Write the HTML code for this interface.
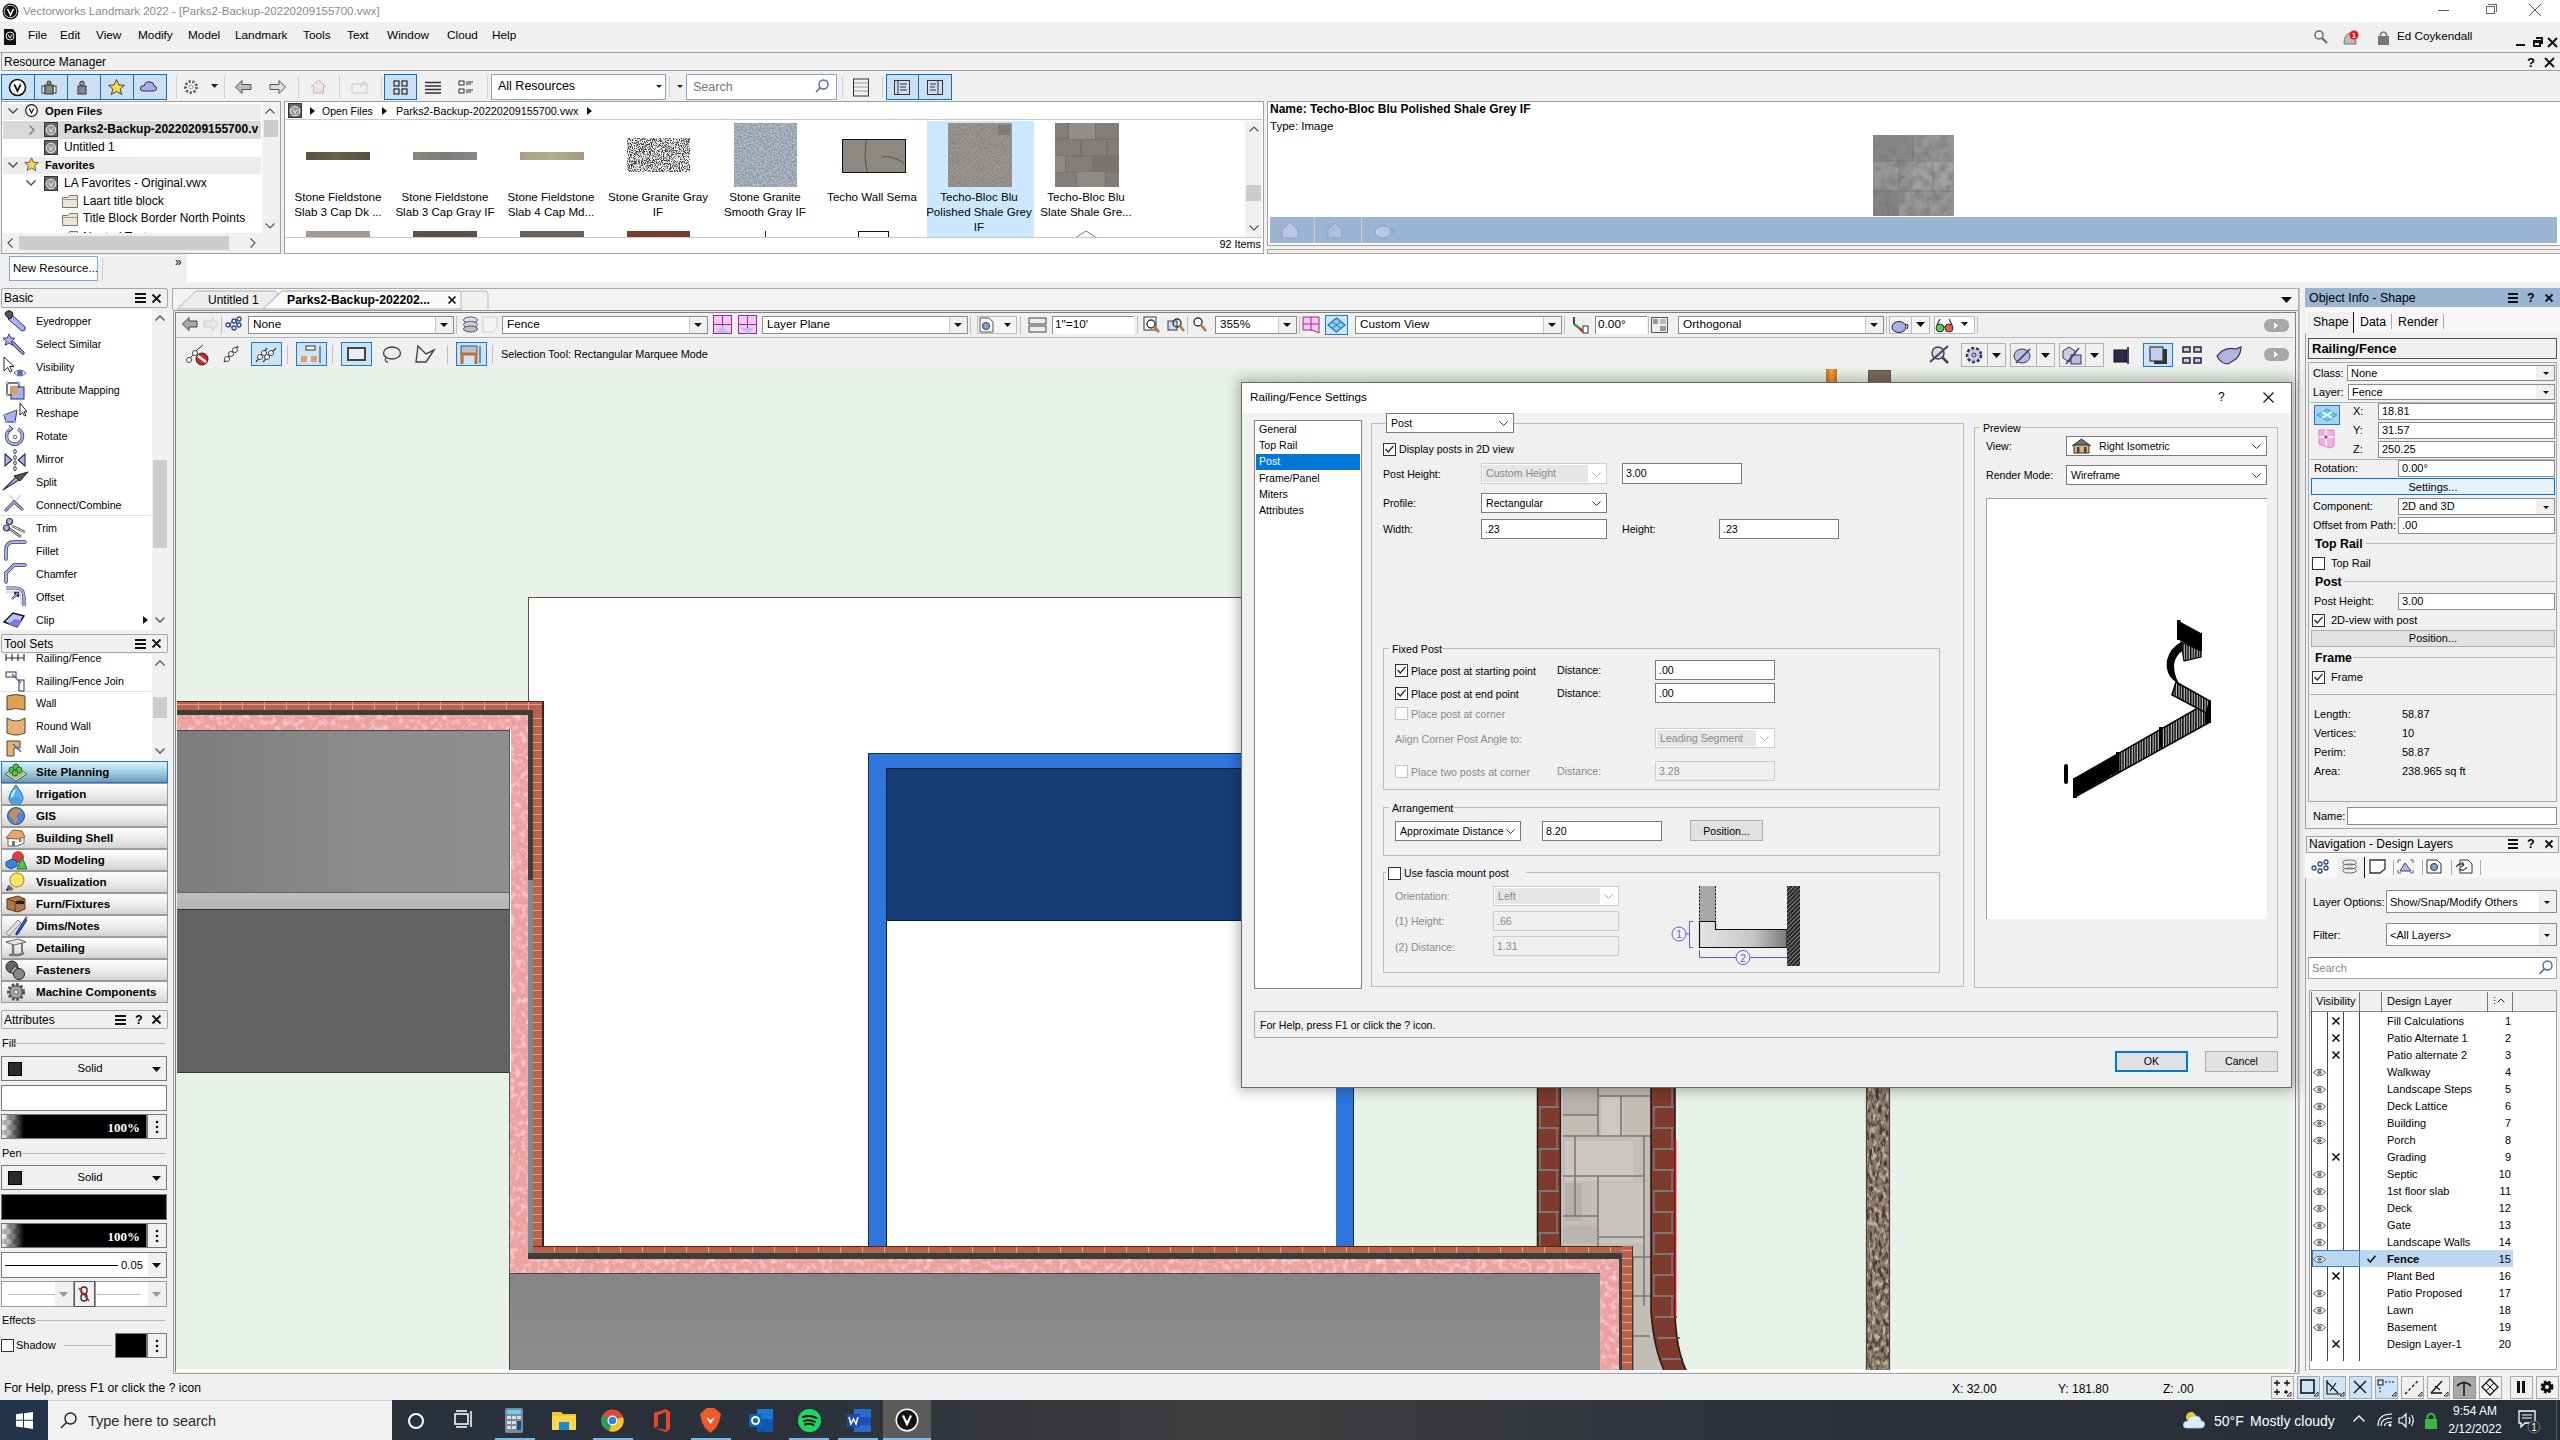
<!DOCTYPE html>
<html><head><meta charset="utf-8"><title>Vectorworks</title>
<style>
html,body{margin:0;padding:0}
body{width:2560px;height:1440px;position:relative;overflow:hidden;background:#f0f0f0;font-family:"Liberation Sans",sans-serif;font-size:12px;color:#000}
.a{position:absolute}
.t{position:absolute;white-space:nowrap;line-height:1}
.b{font-weight:bold}
.ln{position:absolute;background:#a0a0a0}
.fld{position:absolute;background:#fff;border:1px solid #7a7a7a;box-sizing:border-box}
.btn{position:absolute;box-sizing:border-box}
svg{position:absolute;overflow:visible}

</style></head><body>
<div class="a" style="left:0px;top:0px;width:2560px;height:22px;background:#fff"></div>
<svg style="left:2px;top:3px;" width="17" height="17" viewBox="0 0 17 17"><circle cx="8.5" cy="8.5" r="8" fill="#111"/><circle cx="8.5" cy="8.5" r="6.3" fill="none" stroke="#fff" stroke-width="0.8"/><path d="M5.5 6 L8.5 12 L11.5 6" fill="none" stroke="#fff" stroke-width="1.6"/></svg>
<div class="t " style="left:23px;top:5.5px;font-size:11.5px;color:#8a8a8a">Vectorworks Landmark 2022 - [Parks2-Backup-20220209155700.vwx]</div>
<div class="a" style="left:2438px;top:10px;width:11px;height:1px;background:#555"></div>
<div class="a" style="left:2486px;top:6px;width:9px;height:8px;border:1px solid #666;box-sizing:border-box"></div>
<div class="a" style="left:2488px;top:4px;width:9px;height:8px;border-top:1px solid #666;border-right:1px solid #666;box-sizing:border-box"></div>
<svg style="left:2529px;top:4px;" width="12" height="12" viewBox="0 0 12 12"><path d="M0 0L12 12M12 0L0 12" stroke="#555" stroke-width="1"/></svg>
<div class="a" style="left:0px;top:22px;width:2560px;height:30px;background:#f0f0f0"></div>
<svg style="left:4px;top:29px;" width="13" height="16" viewBox="0 0 13 16"><path d="M0 0H9L12 4V16H0Z" fill="#111"/><circle cx="6" cy="7" r="4" fill="none" stroke="#fff" stroke-width="0.9"/><path d="M4 5.5L6 9L8 5.5" fill="none" stroke="#fff" stroke-width="1"/></svg>
<div class="t " style="left:28px;top:30.3px;font-size:11.8px;">File</div>
<div class="t " style="left:60px;top:30.3px;font-size:11.8px;">Edit</div>
<div class="t " style="left:96px;top:30.3px;font-size:11.8px;">View</div>
<div class="t " style="left:138px;top:30.3px;font-size:11.8px;">Modify</div>
<div class="t " style="left:188px;top:30.3px;font-size:11.8px;">Model</div>
<div class="t " style="left:235px;top:30.3px;font-size:11.8px;">Landmark</div>
<div class="t " style="left:303px;top:30.3px;font-size:11.8px;">Tools</div>
<div class="t " style="left:347px;top:30.3px;font-size:11.8px;">Text</div>
<div class="t " style="left:387px;top:30.3px;font-size:11.8px;">Window</div>
<div class="t " style="left:447px;top:30.3px;font-size:11.8px;">Cloud</div>
<div class="t " style="left:492px;top:30.3px;font-size:11.8px;">Help</div>
<svg style="left:2314px;top:30px;" width="14" height="14" viewBox="0 0 14 14"><circle cx="5" cy="5" r="4" fill="none" stroke="#666" stroke-width="1.5"/><path d="M8 8L13 13" stroke="#666" stroke-width="2"/></svg>
<svg style="left:2342px;top:30px;" width="18" height="16" viewBox="0 0 18 16"><path d="M2 14 Q2 4 8 3 Q14 4 14 14Z" fill="#bbb" stroke="#777" stroke-width="1"/><circle cx="12" cy="5" r="4.5" fill="#e8141b"/><text x="12" y="8" font-size="7" fill="#fff" text-anchor="middle" font-family="Liberation Sans" font-weight="bold">1</text></svg>
<svg style="left:2377px;top:30px;" width="13" height="16" viewBox="0 0 13 16"><rect x="1" y="6" width="11" height="9" fill="#777"/><path d="M3.5 6V4 Q6.5 0 9.5 4V6" fill="none" stroke="#777" stroke-width="1.5"/></svg>
<div class="t " style="left:2397px;top:30.4px;font-size:11.7px;">Ed Coykendall</div>
<div class="a" style="left:2516px;top:44px;width:9px;height:2px;background:#111"></div>
<div class="a" style="left:2533px;top:40px;width:8px;height:7px;border:2px solid #111;border-top-width:3px;box-sizing:border-box"></div>
<div class="a" style="left:2536px;top:37px;width:7px;height:7px;border-top:2px solid #111;border-right:2px solid #111;box-sizing:border-box"></div>
<svg style="left:2548px;top:38px;" width="9" height="9" viewBox="0 0 9 9"><path d="M0 0L9 9M9 0L0 9" stroke="#111" stroke-width="2"/></svg>
<div class="a" style="left:0px;top:52px;width:2560px;height:1px;background:#a0a0a0"></div>
<div class="a" style="left:1px;top:53px;width:2559px;height:18px;background:#f0f0f0;border-left:1px solid #a0a0a0;border-bottom:1px solid #a0a0a0;box-sizing:border-box"></div>
<div class="t " style="left:4px;top:56.2px;font-size:12px;">Resource Manager</div>
<div class="t " style="left:2527px;top:55.7px;font-size:13px;font-weight:bold">?</div>
<svg style="left:2545px;top:58px;" width="9" height="9" viewBox="0 0 9 9"><path d="M0 0L9 9M9 0L0 9" stroke="#111" stroke-width="1.8"/></svg>
<div class="a" style="left:1px;top:74px;width:166px;height:26px;background:#cce0f4;border:1px solid #0b6fd6;box-sizing:border-box"></div>
<div class="a" style="left:34px;top:74px;width:1px;height:26px;background:#0b6fd6"></div>
<div class="a" style="left:67px;top:74px;width:1px;height:26px;background:#0b6fd6"></div>
<div class="a" style="left:100px;top:74px;width:1px;height:26px;background:#0b6fd6"></div>
<div class="a" style="left:133px;top:74px;width:1px;height:26px;background:#0b6fd6"></div>
<svg style="left:8px;top:78px;" width="19" height="19" viewBox="0 0 19 19"><circle cx="9.5" cy="9.5" r="8" fill="#fff" stroke="#111" stroke-width="1.6"/><path d="M6.3 6.5L9.5 13L12.7 6.5" fill="none" stroke="#111" stroke-width="1.7"/></svg>
<svg style="left:41px;top:80px;" width="16" height="15" viewBox="0 0 16 15"><rect x="1" y="6" width="3" height="7" fill="#fff" stroke="#333"/><rect x="12" y="6" width="3" height="7" fill="#fff" stroke="#333"/><rect x="4" y="5" width="8" height="9" fill="#888" stroke="#333"/><circle cx="8" cy="3" r="2" fill="#888" stroke="#333"/></svg>
<svg style="left:77px;top:80px;" width="10" height="15" viewBox="0 0 10 15"><rect x="1" y="6" width="8" height="8" fill="#888" stroke="#333"/><circle cx="5" cy="3.5" r="2.3" fill="#999" stroke="#333"/></svg>
<svg style="left:108px;top:79px;" width="17" height="16" viewBox="0 0 17 16"><path d="M8.5 0.5L11 6L16.5 6.3L12.2 10L13.7 15.5L8.5 12.5L3.3 15.5L4.8 10L0.5 6.3L6 6Z" fill="#f7d847" stroke="#444" stroke-width="1"/></svg>
<svg style="left:140px;top:80px;" width="17" height="11" viewBox="0 0 17 11"><path d="M3 11 Q0 11 0.5 8 Q1 5 4 6 Q5 1 10 2 Q14 2 14 6 Q17 6 16.5 9 Q16 11 13 11Z" fill="#aaaaf0" stroke="#333" stroke-width="1"/></svg>
<div class="a" style="left:176px;top:76px;width:1px;height:22px;background:#cfcfcf"></div>
<svg style="left:183px;top:79px;" width="16" height="16" viewBox="0 0 16 16"><circle cx="8" cy="8" r="5.5" fill="#fff" stroke="#666" stroke-width="3" stroke-dasharray="2.2 1.6"/><circle cx="8" cy="8" r="2" fill="none" stroke="#7d8fb0"/></svg>
<svg style="left:211px;top:84px;" width="7" height="4" viewBox="0 0 7 4"><path d="M0 0H7L3.5 4Z" fill="#222"/></svg>
<div class="a" style="left:224px;top:76px;width:1px;height:22px;background:#cfcfcf"></div>
<svg style="left:235px;top:80px;" width="17" height="14" viewBox="0 0 17 14"><path d="M0.5 7L7 0.5V4.5H16V9.5H7V13.5Z" fill="#bbb" stroke="#555" stroke-width="1"/></svg>
<svg style="left:269px;top:80px;" width="17" height="14" viewBox="0 0 17 14"><path d="M16.5 7L10 0.5V4.5H1V9.5H10V13.5Z" fill="#ddd" stroke="#555" stroke-width="1"/></svg>
<div class="a" style="left:298px;top:76px;width:1px;height:22px;background:#cfcfcf"></div>
<svg style="left:310px;top:79px;" width="17" height="15" viewBox="0 0 17 15"><path d="M1 8L8.5 1L16 8M3.5 6V14H13.5V6" fill="#f2e0e0" stroke="#d8b0b0" stroke-width="1"/></svg>
<div class="a" style="left:339px;top:76px;width:1px;height:22px;background:#cfcfcf"></div>
<svg style="left:351px;top:80px;" width="17" height="14" viewBox="0 0 17 14"><rect x="1" y="4" width="15" height="9" fill="#efefef" stroke="#ccc"/><path d="M9 7L13 2L16 6" fill="none" stroke="#b5e0b5" stroke-width="1.5"/></svg>
<div class="a" style="left:381px;top:76px;width:1px;height:22px;background:#cfcfcf"></div>
<div class="a" style="left:384px;top:74px;width:33px;height:26px;background:#cce0f4;border:1px solid #0b6fd6;box-sizing:border-box"></div>
<svg style="left:393px;top:80px;" width="15" height="15" viewBox="0 0 15 15"><rect x="1" y="1" width="5" height="5" fill="none" stroke="#333" stroke-width="1.3"/><rect x="9" y="1" width="5" height="5" fill="none" stroke="#333" stroke-width="1.3"/><rect x="1" y="9" width="5" height="5" fill="none" stroke="#333" stroke-width="1.3"/><rect x="9" y="9" width="5" height="5" fill="none" stroke="#333" stroke-width="1.3"/></svg>
<svg style="left:425px;top:81px;" width="16" height="13" viewBox="0 0 16 13"><path d="M0 1.5H16M0 5H16M0 8.5H16M0 12H16" stroke="#333" stroke-width="1.3"/></svg>
<svg style="left:458px;top:80px;" width="16" height="15" viewBox="0 0 16 15"><rect x="1" y="1" width="5" height="4" fill="none" stroke="#333"/><rect x="1" y="9" width="5" height="4" fill="none" stroke="#333"/><path d="M8 2H15M8 4H13M8 10H15M8 12H13" stroke="#333"/></svg>
<div class="a" style="left:487px;top:76px;width:1px;height:22px;background:#cfcfcf"></div>
<div class="a" style="left:491px;top:74px;width:175px;height:26px;background:#fff;border:1px solid #7ea6d8;box-sizing:border-box"></div>
<div class="t " style="left:498px;top:80.0px;font-size:12.5px;">All Resources</div>
<svg style="left:656px;top:85px;" width="6" height="3" viewBox="0 0 6 3"><path d="M0 0H6L3 3Z" fill="#222"/></svg>
<div class="a" style="left:669px;top:76px;width:1px;height:22px;background:#cfcfcf"></div>
<svg style="left:677px;top:85px;" width="6" height="3" viewBox="0 0 6 3"><path d="M0 0H6L3 3Z" fill="#222"/></svg>
<div class="a" style="left:686px;top:74px;width:151px;height:26px;background:#fff;border:1px solid #7ea6d8;box-sizing:border-box"></div>
<div class="t " style="left:693px;top:81.0px;font-size:12.5px;color:#777">Search</div>
<svg style="left:815px;top:79px;" width="14" height="14" viewBox="0 0 14 14"><circle cx="8.5" cy="5.5" r="4.5" fill="none" stroke="#4a6aa8" stroke-width="1.4"/><path d="M5.5 8.5L1 13" stroke="#4a6aa8" stroke-width="1.6"/></svg>
<div class="a" style="left:842px;top:76px;width:1px;height:22px;background:#cfcfcf"></div>
<svg style="left:853px;top:78px;" width="16" height="20" viewBox="0 0 16 20"><rect x="0.5" y="1" width="15" height="17" fill="none" stroke="#333"/><path d="M1 5H15M1 9H15M1 13H15" stroke="#999"/></svg>
<div class="a" style="left:882px;top:76px;width:1px;height:22px;background:#cfcfcf"></div>
<div class="a" style="left:886px;top:74px;width:66px;height:26px;background:#cce0f4;border:1px solid #0b6fd6;box-sizing:border-box"></div>
<div class="a" style="left:918px;top:74px;width:1px;height:26px;background:#0b6fd6"></div>
<svg style="left:894px;top:80px;" width="16" height="15" viewBox="0 0 16 15"><rect x="0.5" y="0.5" width="15" height="14" fill="none" stroke="#333"/><path d="M4 1V14M6 4H13M6 7H12M6 10H13" stroke="#333"/></svg>
<svg style="left:927px;top:80px;" width="16" height="15" viewBox="0 0 16 15"><rect x="0.5" y="0.5" width="15" height="14" fill="none" stroke="#333"/><path d="M11 1V14M3 4H9M3 7H8M3 10H9" stroke="#333"/></svg>
<div class="a" style="left:1px;top:101px;width:280px;height:153px;background:#fff;border:1px solid #a0a0a0;box-sizing:border-box"></div>
<div class="a" style="left:3px;top:104px;width:258px;height:16px;background:#ececec"></div>
<div class="a" style="left:3px;top:121px;width:258px;height:18px;background:#d9d9d9"></div>
<div class="a" style="left:3px;top:157px;width:258px;height:17px;background:#ececec"></div>
<div class="a" style="left:262px;top:102px;width:18px;height:131px;background:#f0f0f0"></div>
<svg style="left:265px;top:108px;" width="10" height="6" viewBox="0 0 10 6"><path d="M0.5 5.5L5 1L9.5 5.5" fill="none" stroke="#555" stroke-width="1.2"/></svg>
<svg style="left:265px;top:223px;" width="10" height="6" viewBox="0 0 10 6"><path d="M0.5 0.5L5 5L9.5 0.5" fill="none" stroke="#555" stroke-width="1.2"/></svg>
<div class="a" style="left:264px;top:120px;width:14px;height:17px;background:#cdcdcd"></div>
<div class="a" style="left:2px;top:233px;width:278px;height:20px;background:#f0f0f0"></div>
<div class="a" style="left:19px;top:236px;width:210px;height:14px;background:#cdcdcd"></div>
<svg style="left:7px;top:238px;" width="6" height="10" viewBox="0 0 6 10"><path d="M5.5 0.5L1 5L5.5 9.5" fill="none" stroke="#555" stroke-width="1.2"/></svg>
<svg style="left:250px;top:238px;" width="6" height="10" viewBox="0 0 6 10"><path d="M0.5 0.5L5 5L0.5 9.5" fill="none" stroke="#555" stroke-width="1.2"/></svg>
<svg style="left:8px;top:108px;" width="10" height="6" viewBox="0 0 10 6"><path d="M0.5 0.5L5 5L9.5 0.5" fill="none" stroke="#444" stroke-width="1.3"/></svg>
<svg style="left:25px;top:104px;" width="13" height="13" viewBox="0 0 13 13"><circle cx="6.5" cy="6.5" r="5.8" fill="#fff" stroke="#111" stroke-width="1.2"/><path d="M4.3 4.5L6.5 9L8.7 4.5" fill="none" stroke="#111" stroke-width="1.2"/></svg>
<div class="t " style="left:45px;top:105.6px;font-size:11.2px;font-weight:bold">Open Files</div>
<svg style="left:29px;top:125px;" width="6" height="10" viewBox="0 0 6 10"><path d="M0.5 0.5L5 5L0.5 9.5" fill="none" stroke="#777" stroke-width="1.2"/></svg>
<svg style="left:44px;top:122px;" width="14" height="15" viewBox="0 0 14 15"><rect x="0.5" y="0.5" width="13" height="14" fill="#666" stroke="#333"/><circle cx="7" cy="8" r="4.8" fill="#999" stroke="#eee" stroke-width="1"/><path d="M5 6.3L7 10.3L9 6.3" fill="none" stroke="#eee" stroke-width="1"/></svg>
<div class="t " style="left:64px;top:123.2px;font-size:12px;font-weight:bold">Parks2-Backup-20220209155700.v</div>
<svg style="left:44px;top:140px;" width="14" height="15" viewBox="0 0 14 15"><rect x="0.5" y="0.5" width="13" height="14" fill="#666" stroke="#333"/><circle cx="7" cy="8" r="4.8" fill="#999" stroke="#eee" stroke-width="1"/><path d="M5 6.3L7 10.3L9 6.3" fill="none" stroke="#eee" stroke-width="1"/></svg>
<div class="t " style="left:64px;top:141.2px;font-size:12px;">Untitled 1</div>
<svg style="left:8px;top:162px;" width="10" height="6" viewBox="0 0 10 6"><path d="M0.5 0.5L5 5L9.5 0.5" fill="none" stroke="#444" stroke-width="1.3"/></svg>
<svg style="left:24px;top:157px;" width="15" height="15" viewBox="0 0 15 15"><path d="M7.5 0.8L9.5 5.3L14.3 5.6L10.6 8.7L11.8 13.6L7.5 11L3.2 13.6L4.4 8.7L0.7 5.6L5.5 5.3Z" fill="#f7d847" stroke="#555" stroke-width="0.9"/></svg>
<div class="t " style="left:45px;top:159.6px;font-size:11.2px;font-weight:bold">Favorites</div>
<svg style="left:26px;top:180px;" width="10" height="6" viewBox="0 0 10 6"><path d="M0.5 0.5L5 5L9.5 0.5" fill="none" stroke="#444" stroke-width="1.3"/></svg>
<svg style="left:44px;top:176px;" width="14" height="15" viewBox="0 0 14 15"><rect x="0.5" y="0.5" width="13" height="14" fill="#666" stroke="#333"/><circle cx="7" cy="8" r="4.8" fill="#999" stroke="#eee" stroke-width="1"/><path d="M5 6.3L7 10.3L9 6.3" fill="none" stroke="#eee" stroke-width="1"/></svg>
<div class="t " style="left:64px;top:177.2px;font-size:12px;">LA Favorites - Original.vwx</div>
<svg style="left:62px;top:195px;" width="16" height="13" viewBox="0 0 16 13"><path d="M0.5 2.5H6L7.5 0.5H15.5V12.5H0.5Z" fill="#ece6d2" stroke="#777"/><path d="M0.5 4.5H15.5" stroke="#999"/></svg>
<div class="t " style="left:83px;top:195.2px;font-size:12px;">Laart title block</div>
<svg style="left:62px;top:213px;" width="16" height="13" viewBox="0 0 16 13"><path d="M0.5 2.5H6L7.5 0.5H15.5V12.5H0.5Z" fill="#ece6d2" stroke="#777"/><path d="M0.5 4.5H15.5" stroke="#999"/></svg>
<div class="t " style="left:83px;top:213.3px;font-size:11.9px;">Title Block Border North Points</div>
<div class="a" style="left:3px;top:228px;width:258px;height:5px;overflow:hidden"><svg style="left:59px;top:3px" width="16" height="13"><path d="M0.5 2.5H6L7.5 0.5H15.5V12.5H0.5Z" fill="#ece6d2" stroke="#777"/></svg><div class="t" style="left:80px;top:3.2px;font-size:12px">Neutral Text</div></div>
<div class="a" style="left:284px;top:101px;width:980px;height:153px;background:#fff;border:1px solid #a0a0a0;box-sizing:border-box"></div>
<div class="a" style="left:285px;top:119px;width:977px;height:1px;background:#c8c8c8"></div>
<svg style="left:288px;top:103px;" width="14" height="15" viewBox="0 0 14 15"><rect x="0.5" y="0.5" width="13" height="14" fill="#666" stroke="#333"/><circle cx="7" cy="8" r="4.8" fill="#999" stroke="#eee"/><path d="M5 6.3L7 10.3L9 6.3" fill="none" stroke="#eee"/></svg>
<svg style="left:310px;top:107px;" width="5" height="8" viewBox="0 0 5 8"><path d="M0 0L5 4L0 8Z" fill="#111"/></svg>
<div class="t " style="left:322px;top:105.9px;font-size:10.5px;">Open Files</div>
<svg style="left:382px;top:107px;" width="5" height="8" viewBox="0 0 5 8"><path d="M0 0L5 4L0 8Z" fill="#111"/></svg>
<div class="t " style="left:396px;top:105.8px;font-size:10.8px;">Parks2-Backup-20220209155700.vwx</div>
<svg style="left:587px;top:107px;" width="5" height="8" viewBox="0 0 5 8"><path d="M0 0L5 4L0 8Z" fill="#111"/></svg>
<div class="a" style="left:927px;top:121px;width:107px;height:116px;background:#cce8ff"></div>
<div class="a" style="left:306px;top:152px;width:64px;height:8px;background:linear-gradient(90deg,#5b5344,#6a604d,#564e40)"></div>
<div class="a" style="left:413px;top:152px;width:64px;height:8px;background:linear-gradient(90deg,#8c8783,#7e7a77,#8a8683)"></div>
<div class="a" style="left:520px;top:152px;width:64px;height:8px;background:linear-gradient(90deg,#a8a07e,#b4ad8e,#a39a7a)"></div>
<svg style="left:627px;top:138px;" width="63" height="34" viewBox="0 0 63 34"><filter id="gr1" x="0" y="0" width="100%" height="100%"><feTurbulence type="fractalNoise" baseFrequency="1.1" numOctaves="1" seed="3"/><feColorMatrix type="matrix" values="0 0 0 0 0.05  0 0 0 0 0.05  0 0 0 0 0.05  7 0 0 0 -3.2"/></filter><rect width="63" height="34" fill="#eeeeee"/><rect width="63" height="34" filter="url(#gr1)"/></svg>
<svg style="left:734px;top:123px;" width="63" height="64" viewBox="0 0 63 64"><filter id="gr2" x="0" y="0" width="100%" height="100%"><feTurbulence type="fractalNoise" baseFrequency="0.6" numOctaves="2" seed="5"/><feColorMatrix type="matrix" values="0 0 0 0 0.25  0 0 0 0 0.3  0 0 0 0 0.38  3.5 0 0 0 -1.3"/></filter><rect width="63" height="64" fill="#b4bcc8"/><rect width="63" height="64" filter="url(#gr2)"/></svg>
<div class="a" style="left:842px;top:139px;width:64px;height:34px;background:#8d8882;border:1px solid #111;box-sizing:border-box"></div>
<svg style="left:842px;top:139px;" width="64" height="34" viewBox="0 0 64 34"><path d="M24 1 L23 20 L25 33 M40 18 Q50 16 62 24" stroke="#444" fill="none" stroke-width="0.8"/></svg>
<svg style="left:948px;top:123px;" width="64" height="64" viewBox="0 0 64 64"><filter id="gr3" x="0" y="0" width="100%" height="100%"><feTurbulence type="fractalNoise" baseFrequency="0.7" numOctaves="2" seed="7"/><feColorMatrix type="matrix" values="0 0 0 0 0.25  0 0 0 0 0.23  0 0 0 0 0.22  4.0 0 0 0 -1.6"/></filter><rect width="64" height="64" fill="#9c9792"/><rect width="64" height="64" filter="url(#gr3)"/><rect x="50" y="2" width="12" height="10" fill="#555" opacity=".35"/></svg>
<svg style="left:1055px;top:123px;" width="64" height="64" viewBox="0 0 64 64"><rect width="64" height="64" fill="#847e7a"/><path d="M0 16H64M0 33H64M0 49H64M13 0V16M40 0V16M26 16V33M52 16V33M10 33V49M38 33V49M22 49V64M50 49V64" stroke="#6f6a67" stroke-width="1.2"/><rect x="14" y="0" width="26" height="16" fill="#938d89"/><rect x="0" y="33" width="10" height="16" fill="#8f8985"/><rect x="38" y="33" width="26" height="16" fill="#797470"/><rect x="22" y="49" width="28" height="15" fill="#918b87"/></svg>
<div class="t " style="left:278.0px;width:120px;text-align:center;top:191.4px;font-size:11.6px;">Stone Fieldstone</div>
<div class="t " style="left:278.0px;width:120px;text-align:center;top:206.4px;font-size:11.6px;">Slab 3 Cap Dk ...</div>
<div class="t " style="left:385.0px;width:120px;text-align:center;top:191.4px;font-size:11.6px;">Stone Fieldstone</div>
<div class="t " style="left:385.0px;width:120px;text-align:center;top:206.4px;font-size:11.6px;">Slab 3 Cap Gray IF</div>
<div class="t " style="left:491.0px;width:120px;text-align:center;top:191.4px;font-size:11.6px;">Stone Fieldstone</div>
<div class="t " style="left:491.0px;width:120px;text-align:center;top:206.4px;font-size:11.6px;">Slab 4 Cap Md...</div>
<div class="t " style="left:598.0px;width:120px;text-align:center;top:191.4px;font-size:11.6px;">Stone Granite Gray</div>
<div class="t " style="left:598.0px;width:120px;text-align:center;top:206.4px;font-size:11.6px;">IF</div>
<div class="t " style="left:705.0px;width:120px;text-align:center;top:191.4px;font-size:11.6px;">Stone Granite</div>
<div class="t " style="left:705.0px;width:120px;text-align:center;top:206.4px;font-size:11.6px;">Smooth Gray IF</div>
<div class="t " style="left:812.0px;width:120px;text-align:center;top:191.4px;font-size:11.6px;">Techo Wall Sema</div>
<div class="t " style="left:919.0px;width:120px;text-align:center;top:191.4px;font-size:11.6px;">Techo-Bloc Blu</div>
<div class="t " style="left:919.0px;width:120px;text-align:center;top:206.4px;font-size:11.6px;">Polished Shale Grey</div>
<div class="t " style="left:919.0px;width:120px;text-align:center;top:221.4px;font-size:11.6px;">IF</div>
<div class="t " style="left:1026.0px;width:120px;text-align:center;top:191.4px;font-size:11.6px;">Techo-Bloc Blu</div>
<div class="t " style="left:1026.0px;width:120px;text-align:center;top:206.4px;font-size:11.6px;">Slate Shale Gre...</div>
<div class="a" style="left:306px;top:231px;width:64px;height:7px;background:#a39b93"></div>
<div class="a" style="left:413px;top:231px;width:64px;height:7px;background:#5c5049"></div>
<div class="a" style="left:520px;top:231px;width:64px;height:7px;background:#6b625b"></div>
<div class="a" style="left:627px;top:231px;width:63px;height:7px;background:#7a3d2d"></div>
<div class="a" style="left:765px;top:231px;width:1px;height:7px;background:#333"></div>
<div class="a" style="left:858px;top:231px;width:31px;height:7px;border:1px solid #111;border-bottom:none;box-sizing:border-box"></div>
<svg style="left:1075px;top:230px;" width="22" height="8" viewBox="0 0 22 8"><path d="M0 8L11 1L22 8" fill="none" stroke="#777"/></svg>
<div class="a" style="left:285px;top:237px;width:977px;height:1px;background:#c8c8c8"></div>
<div class="a" style="left:1245px;top:121px;width:17px;height:116px;background:#f0f0f0"></div>
<svg style="left:1249px;top:126px;" width="10" height="6" viewBox="0 0 10 6"><path d="M0.5 5.5L5 1L9.5 5.5" fill="none" stroke="#555" stroke-width="1.2"/></svg>
<svg style="left:1249px;top:225px;" width="10" height="6" viewBox="0 0 10 6"><path d="M0.5 0.5L5 5L9.5 0.5" fill="none" stroke="#555" stroke-width="1.2"/></svg>
<div class="a" style="left:1246px;top:185px;width:15px;height:16px;background:#cdcdcd"></div>
<div class="t " style="right:1299px;top:238.8px;font-size:10.8px;">92 Items</div>
<div class="a" style="left:1267px;top:101px;width:1293px;height:145px;background:#fff;border:1px solid #a0a0a0;border-right:none;box-sizing:border-box"></div>
<div class="t " style="left:1270px;top:103.2px;font-size:12px;font-weight:bold">Name: Techo-Bloc Blu Polished Shale Grey IF</div>
<div class="t " style="left:1270px;top:120.5px;font-size:11.5px;">Type: Image</div>
<svg style="left:1873px;top:135px;" width="81" height="81" viewBox="0 0 81 81"><filter id="gr4" x="0" y="0" width="100%" height="100%"><feTurbulence type="fractalNoise" baseFrequency="0.12" numOctaves="3" seed="9"/><feColorMatrix type="matrix" values="0 0 0 0 0.2  0 0 0 0 0.2  0 0 0 0 0.2  1.6 0 0 0 -0.5"/></filter><rect width="81" height="81" fill="#9a9896"/><rect x="0" y="0" width="40" height="26" fill="#8a8886"/><rect x="40" y="26" width="41" height="30" fill="#a4a2a0"/><rect x="0" y="56" width="26" height="25" fill="#858381"/><rect width="81" height="81" filter="url(#gr4)"/><path d="M0 26H81M0 56H81M40 0V26M26 26V56M60 26V56M15 56V81M55 56V81" stroke="#6a6866" stroke-width="0.8" opacity=".6"/></svg>
<div class="a" style="left:1270px;top:217px;width:1287px;height:26px;background:#9ab4d4"></div>
<div class="a" style="left:1314px;top:217px;width:1px;height:26px;background:#d8d0b8"></div>
<div class="a" style="left:1361px;top:217px;width:1px;height:26px;background:#d8d0b8"></div>
<svg style="left:1280px;top:220px;" width="20" height="20" viewBox="0 0 20 20"><path d="M2 10L10 2L18 10V18H2Z" fill="#b8c8e0" stroke="#8aa0c0"/></svg>
<svg style="left:1325px;top:220px;" width="20" height="20" viewBox="0 0 20 20"><path d="M3 9L10 3L17 9V18H3Z" fill="#b0c0da" stroke="#8aa0c0"/></svg>
<svg style="left:1372px;top:220px;" width="24" height="20" viewBox="0 0 24 20"><ellipse cx="11" cy="12" rx="8" ry="6" fill="#b8c8e4" stroke="#8aa0c0"/><path d="M18 10Q23 8 20 14" fill="none" stroke="#8aa0c0"/></svg>
<div class="a" style="left:1267px;top:249px;width:1293px;height:5px;border:1px solid #a8a8a8;border-right:none;box-sizing:border-box"></div>
<div class="a" style="left:187px;top:254px;width:2373px;height:28px;background:#fff"></div>
<div class="a" style="left:9px;top:256px;width:89px;height:25px;background:#fff;border:1px solid #7ea6d8;box-sizing:border-box"></div>
<div class="t " style="left:13px;top:262.5px;font-size:11.5px;">New Resource...</div>
<div class="a" style="left:102px;top:258px;width:1px;height:22px;background:#cfcfcf"></div>
<div class="t " style="left:175px;top:256.2px;font-size:12px;">&raquo;</div>
<div class="a" style="left:1px;top:288px;width:167px;height:20px;background:#f0f0f0;border:1px solid #a8a8a8;border-radius:2px;box-sizing:border-box"></div>
<div class="t " style="left:4px;top:292.2px;font-size:12px;">Basic</div>
<svg style="left:135px;top:293.0px;" width="11" height="10" viewBox="0 0 11 10"><path d="M0 1H11M0 5H11M0 9H11" stroke="#111" stroke-width="1.8"/></svg>
<svg style="left:152px;top:293.5px;" width="9" height="9" viewBox="0 0 9 9"><path d="M0.5 0.5L8.5 8.5M8.5 0.5L0.5 8.5" stroke="#111" stroke-width="1.8"/></svg>
<div class="a" style="left:0px;top:309px;width:152px;height:322px;background:#fff"></div>
<div class="a" style="left:152px;top:309px;width:16px;height:322px;background:#f0f0f0"></div>
<div class="a" style="left:153px;top:460px;width:14px;height:88px;background:#cdcdcd"></div>
<svg style="left:155px;top:315px;" width="10" height="6" viewBox="0 0 10 6"><path d="M0.5 5.5L5 1L9.5 5.5" fill="none" stroke="#555" stroke-width="1.3"/></svg>
<svg style="left:155px;top:617px;" width="10" height="6" viewBox="0 0 10 6"><path d="M0.5 0.5L5 5L9.5 0.5" fill="none" stroke="#555" stroke-width="1.3"/></svg>
<div class="a" style="left:0px;top:515px;width:151px;height:1px;background:#d0e4f4"></div>
<svg style="left:3px;top:310px;" width="24" height="22" viewBox="0 0 24 22"><path d="M9 5L22 17Q23 21 19 21L5 9Z" fill="#aab0f2" stroke="#2a2f5a" stroke-width="1"/><path d="M3 2Q6 -1 9 2Q11 4 9 7L7 9Q4 8 2.5 5Q1.5 3 3 2Z" fill="#555" stroke="#222"/></svg>
<div class="t " style="left:36px;top:315.8px;font-size:10.7px;">Eyedropper</div>
<svg style="left:3px;top:333px;" width="24" height="22" viewBox="0 0 24 22"><path d="M6 1L7.8 5L12 5.3L8.8 8L9.8 12.3L6 10L2.2 12.3L3.2 8L0 5.3L4.2 5Z" fill="#aab0f2" stroke="#2a2f5a" stroke-width="0.9"/><path d="M10 10L20 20" stroke="#2a2f5a" stroke-width="3.2" stroke-linecap="round"/><path d="M10 10L20 20" stroke="#aab0f2" stroke-width="1.6" stroke-linecap="round"/></svg>
<div class="t " style="left:36px;top:338.8px;font-size:10.7px;">Select Similar</div>
<svg style="left:3px;top:356px;" width="24" height="22" viewBox="0 0 24 22"><path d="M1 1V15L4.5 11.5L7 16L9 15L6.8 10.5H11Z" fill="#fff" stroke="#111" stroke-width="0.9"/><path d="M11 17Q17 11 23 17Q17 23 11 17Z" fill="#fff" stroke="#667"/><circle cx="17" cy="17" r="2.8" fill="#4a70b0"/></svg>
<div class="t " style="left:36px;top:361.8px;font-size:10.7px;">Visibility</div>
<svg style="left:3px;top:379px;" width="24" height="22" viewBox="0 0 24 22"><rect x="4" y="4" width="12" height="12" fill="none" stroke="#222" stroke-width="1.2"/><rect x="8" y="8" width="13" height="12" fill="#aab0f2" stroke="#2a2f5a"/><rect x="8" y="8" width="7" height="7" fill="#e0a050"/><circle cx="4" cy="4" r="1.4" fill="#8ab0f0"/><circle cx="16" cy="4" r="1.4" fill="#8ab0f0"/><circle cx="4" cy="16" r="1.4" fill="#8ab0f0"/><circle cx="16" cy="16" r="1.4" fill="#8ab0f0"/></svg>
<div class="t " style="left:36px;top:384.8px;font-size:10.7px;">Attribute Mapping</div>
<svg style="left:3px;top:402px;" width="24" height="22" viewBox="0 0 24 22"><path d="M1 13L14 8L12 20L3 20Z" fill="#aab0f2" stroke="#2a2f5a" stroke-width="1"/><path d="M1 13L14 8" stroke="#888"/><circle cx="1.5" cy="13" r="1.4" fill="#8ab0f0"/><circle cx="3" cy="20" r="1.4" fill="#8ab0f0"/><circle cx="12" cy="20" r="1.4" fill="#8ab0f0"/><path d="M17 1V13L19.5 10.5L21.5 14L23 13.3L21 9.8H24Z" fill="#fff" stroke="#111" stroke-width="0.9"/></svg>
<div class="t " style="left:36px;top:407.8px;font-size:10.7px;">Reshape</div>
<svg style="left:3px;top:425px;" width="24" height="22" viewBox="0 0 24 22"><path d="M15 4A8 8 0 1 1 8 4" fill="none" stroke="#2a2f5a" stroke-width="3.4"/><path d="M15 4A8 8 0 1 1 8 4" fill="none" stroke="#aab0f2" stroke-width="2"/><path d="M6 0L10 4L5 7" fill="#aab0f2" stroke="#2a2f5a" stroke-width="0.9"/><circle cx="12" cy="12" r="1.8" fill="none" stroke="#666"/></svg>
<div class="t " style="left:36px;top:430.8px;font-size:10.7px;">Rotate</div>
<svg style="left:3px;top:448px;" width="24" height="22" viewBox="0 0 24 22"><path d="M2 6L9 12L2 18Z" fill="#aab0f2" stroke="#2a2f5a" stroke-width="1.1"/><path d="M22 6L15 12L22 18Z" fill="#aab0f2" stroke="#2a2f5a" stroke-width="1.1"/><ellipse cx="12" cy="3.5" rx="1.3" ry="2" fill="none" stroke="#2a2f5a"/><ellipse cx="12" cy="9.5" rx="1.3" ry="2" fill="none" stroke="#2a2f5a"/><ellipse cx="12" cy="15" rx="1.3" ry="2" fill="none" stroke="#2a2f5a"/><ellipse cx="12" cy="20.5" rx="1.3" ry="2" fill="none" stroke="#2a2f5a"/></svg>
<div class="t " style="left:36px;top:453.8px;font-size:10.7px;">Mirror</div>
<svg style="left:3px;top:471px;" width="24" height="22" viewBox="0 0 24 22"><path d="M0 19L13 6L16 9Z" fill="#aab0f2" stroke="#2a2f5a" stroke-width="1.1"/><path d="M11 5L25 1L17 10Z" fill="#555" stroke="#222"/></svg>
<div class="t " style="left:36px;top:476.8px;font-size:10.7px;">Split</div>
<svg style="left:3px;top:494px;" width="24" height="22" viewBox="0 0 24 22"><path d="M6 1L18 13M18 1L11 8" stroke="#c8ccf4" stroke-width="1.2"/><path d="M2 17L11 8L20 16" fill="none" stroke="#2a2f5a" stroke-width="3"/><path d="M2 17L11 8L20 16" fill="none" stroke="#aab0f2" stroke-width="1.6"/></svg>
<div class="t " style="left:36px;top:499.8px;font-size:10.7px;">Connect/Combine</div>
<svg style="left:3px;top:517px;" width="24" height="22" viewBox="0 0 24 22"><path d="M9 9L22 15M7 12L18 20" stroke="#333" stroke-width="2.4"/><path d="M9 9L22 15M7 12L18 20" stroke="#eee" stroke-width="1"/><circle cx="6.5" cy="4.5" r="3" fill="#aab0f2" stroke="#333" stroke-width="1.2"/><circle cx="3.5" cy="11" r="3" fill="#aab0f2" stroke="#333" stroke-width="1.2"/></svg>
<div class="t " style="left:36px;top:522.8px;font-size:10.7px;">Trim</div>
<svg style="left:3px;top:540px;" width="24" height="22" viewBox="0 0 24 22"><path d="M3 19V10Q3 2 11 2H22" fill="none" stroke="#2a2f5a" stroke-width="3.4" stroke-linecap="round"/><path d="M3 19V10Q3 2 11 2H22" fill="none" stroke="#aab0f2" stroke-width="2" stroke-linecap="round"/></svg>
<div class="t " style="left:36px;top:545.8px;font-size:10.7px;">Fillet</div>
<svg style="left:3px;top:563px;" width="24" height="22" viewBox="0 0 24 22"><path d="M3 19V10L11 2H22" fill="none" stroke="#2a2f5a" stroke-width="3.4" stroke-linecap="round"/><path d="M3 19V10L11 2H22" fill="none" stroke="#aab0f2" stroke-width="2" stroke-linecap="round"/></svg>
<div class="t " style="left:36px;top:568.8px;font-size:10.7px;">Chamfer</div>
<svg style="left:3px;top:586px;" width="24" height="22" viewBox="0 0 24 22"><path d="M3 6H13Q18 6 18 12V18" fill="none" stroke="#d8daf6" stroke-width="2"/><path d="M3 2H13Q21 2 21 11V20" fill="none" stroke="#2a2f5a" stroke-width="3.2"/><path d="M3 2H13Q21 2 21 11V20" fill="none" stroke="#aab0f2" stroke-width="1.8"/><path d="M9 13L15 7M11 7H15V11" fill="none" stroke="#2a2f5a" stroke-width="2.4"/><path d="M9 13L15 7" stroke="#aab0f2" stroke-width="1.2"/></svg>
<div class="t " style="left:36px;top:591.8px;font-size:10.7px;">Offset</div>
<svg style="left:3px;top:609px;" width="24" height="22" viewBox="0 0 24 22"><path d="M1 13L10 4L21 7L14 18Z" fill="#c0c0f8" stroke="#111" stroke-width="1.4"/><path d="M5 15L12 10L19 12L14 18Z" fill="#7c7ce8"/></svg>
<div class="t " style="left:36px;top:614.8px;font-size:10.7px;">Clip</div>
<svg style="left:143px;top:616px;" width="5" height="8" viewBox="0 0 5 8"><path d="M0 0L5 4L0 8Z" fill="#111"/></svg>
<div class="a" style="left:0px;top:654px;width:152px;height:107px;background:#fff"></div>
<div class="a" style="left:152px;top:654px;width:16px;height:107px;background:#f0f0f0"></div>
<div class="a" style="left:153px;top:697px;width:14px;height:21px;background:#cdcdcd"></div>
<svg style="left:155px;top:660px;" width="10" height="6" viewBox="0 0 10 6"><path d="M0.5 5.5L5 1L9.5 5.5" fill="none" stroke="#555" stroke-width="1.3"/></svg>
<svg style="left:155px;top:748px;" width="10" height="6" viewBox="0 0 10 6"><path d="M0.5 0.5L5 5L9.5 0.5" fill="none" stroke="#555" stroke-width="1.3"/></svg>
<div class="a" style="left:0px;top:691px;width:151px;height:1px;background:#d0e4f4"></div>
<svg style="left:5px;top:647px;" width="24" height="22" viewBox="0 0 24 22"><path d="M1 2V14M7 2V14M13 2V14M19 2V14M1 4H19M1 11H19" stroke="#333" stroke-width="1.2"/></svg>
<div class="t " style="left:36px;top:652.8px;font-size:10.7px;">Railing/Fence</div>
<svg style="left:5px;top:670px;" width="24" height="22" viewBox="0 0 24 22"><rect x="1" y="2" width="10" height="5" fill="#fff" stroke="#333"/><rect x="14" y="10" width="5" height="11" fill="#fff" stroke="#333"/><path d="M7 4L16 13" stroke="#4466cc" stroke-width="1.5"/></svg>
<div class="t " style="left:36px;top:675.8px;font-size:10.7px;">Railing/Fence Join</div>
<svg style="left:5px;top:692px;" width="24" height="22" viewBox="0 0 24 22"><path d="M2 4Q10 1 20 4V18Q10 15 2 18Z" fill="#e3a050" stroke="#444"/></svg>
<div class="t " style="left:36px;top:697.8px;font-size:10.7px;">Wall</div>
<svg style="left:5px;top:715px;" width="24" height="22" viewBox="0 0 24 22"><path d="M2 3Q11 9 20 3V18Q11 22 2 18Z" fill="#e8b070" stroke="#444"/></svg>
<div class="t " style="left:36px;top:720.8px;font-size:10.7px;">Round Wall</div>
<svg style="left:5px;top:738px;" width="24" height="22" viewBox="0 0 24 22"><path d="M2 3H15V10H9V18H2Z" fill="#e8b070" stroke="#444"/><path d="M8 6L16 14" stroke="#4466cc" stroke-width="1.5"/></svg>
<div class="t " style="left:36px;top:743.8px;font-size:10.7px;">Wall Join</div>
<div class="a" style="left:0px;top:630px;width:168px;height:24px;background:#f0f0f0"></div>
<div class="a" style="left:1px;top:634px;width:167px;height:19px;background:#f0f0f0;border:1px solid #a8a8a8;border-radius:2px;box-sizing:border-box"></div>
<div class="t " style="left:4px;top:637.7px;font-size:12px;">Tool Sets</div>
<svg style="left:135px;top:638.5px;" width="11" height="10" viewBox="0 0 11 10"><path d="M0 1H11M0 5H11M0 9H11" stroke="#111" stroke-width="1.8"/></svg>
<svg style="left:152px;top:639.0px;" width="9" height="9" viewBox="0 0 9 9"><path d="M0.5 0.5L8.5 8.5M8.5 0.5L0.5 8.5" stroke="#111" stroke-width="1.8"/></svg>
<div class="a" style="left:1px;top:761px;width:167px;height:22px;background:linear-gradient(#d8f2fa,#a8d4e8 45%,#6a9ab8);border:1px solid #2a70c8;box-sizing:border-box"></div>
<svg style="left:4px;top:761px;" width="24" height="22" viewBox="0 0 24 22"><path d="M1 13L12 6L23 13L12 20Z" fill="#e8e8e8" stroke="#555"/><path d="M3 13L12 7.5L21 13L12 18.5Z" fill="#9ad060"/><path d="M11 17Q13 13 17 10" stroke="#f0a0c0" stroke-width="2.5" fill="none"/><circle cx="8" cy="9" r="3" fill="#5cc050" stroke="#2a6a2a"/><circle cx="12" cy="6" r="3" fill="#5cc050" stroke="#2a6a2a"/><circle cx="15" cy="9" r="3" fill="#5cc050" stroke="#2a6a2a"/><circle cx="11" cy="12" r="3" fill="#5cc050" stroke="#2a6a2a"/></svg>
<div class="t " style="left:36px;top:766.4px;font-size:11.6px;font-weight:bold">Site Planning</div>
<div class="a" style="left:1px;top:783px;width:167px;height:22px;background:linear-gradient(#fefefe,#ececec 50%,#d4d4d4);border:1px solid #9a9a9a;box-sizing:border-box"></div>
<svg style="left:4px;top:783px;" width="24" height="22" viewBox="0 0 24 22"><path d="M12 2Q19 11 19 15A7 7 0 0 1 5 15Q5 11 12 2Z" fill="#5ab0e8" stroke="#2a6aa0"/><path d="M8 14Q8 11 11 7" stroke="#fff" stroke-width="2" fill="none" opacity=".8"/><ellipse cx="12" cy="17" rx="5" ry="3" fill="#3a90d0" opacity=".5"/></svg>
<div class="t " style="left:36px;top:788.4px;font-size:11.6px;font-weight:bold">Irrigation</div>
<div class="a" style="left:1px;top:805px;width:167px;height:22px;background:linear-gradient(#fefefe,#ececec 50%,#d4d4d4);border:1px solid #9a9a9a;box-sizing:border-box"></div>
<svg style="left:4px;top:805px;" width="24" height="22" viewBox="0 0 24 22"><circle cx="12" cy="11" r="8.5" fill="#4a88e0" stroke="#2a4a90"/><path d="M9 4Q14 3 17 6Q16 9 13 9Q12 12 14 14Q13 18 11 19Q10 15 8 13Q5 11 6 8Z" fill="#c89050"/></svg>
<div class="t " style="left:36px;top:810.4px;font-size:11.6px;font-weight:bold">GIS</div>
<div class="a" style="left:1px;top:827px;width:167px;height:22px;background:linear-gradient(#fefefe,#ececec 50%,#d4d4d4);border:1px solid #9a9a9a;box-sizing:border-box"></div>
<svg style="left:4px;top:827px;" width="24" height="22" viewBox="0 0 24 22"><path d="M4 11V19H13L20 16V9Z" fill="#fafafa" stroke="#666"/><path d="M2 11L9 3L18 4L21 10L13 12Z" fill="#e8a870" stroke="#8a5a30"/><rect x="8" y="14" width="3" height="5" fill="#777"/><rect x="15" y="12" width="2.5" height="3" fill="#777"/></svg>
<div class="t " style="left:36px;top:832.4px;font-size:11.6px;font-weight:bold">Building Shell</div>
<div class="a" style="left:1px;top:849px;width:167px;height:22px;background:linear-gradient(#fefefe,#ececec 50%,#d4d4d4);border:1px solid #9a9a9a;box-sizing:border-box"></div>
<svg style="left:4px;top:849px;" width="24" height="22" viewBox="0 0 24 22"><circle cx="14" cy="8" r="5.5" fill="#e83a3a" stroke="#8a1a1a" stroke-width=".6"/><path d="M2 13L8 10L13 12L13 17L7 20L2 17Z" fill="#3a80e0" stroke="#1a4a90"/><path d="M13 20L18 8L23 20Z" fill="#50c050" stroke="#207020"/></svg>
<div class="t " style="left:36px;top:854.4px;font-size:11.6px;font-weight:bold">3D Modeling</div>
<div class="a" style="left:1px;top:871px;width:167px;height:22px;background:linear-gradient(#fefefe,#ececec 50%,#d4d4d4);border:1px solid #9a9a9a;box-sizing:border-box"></div>
<svg style="left:4px;top:871px;" width="24" height="22" viewBox="0 0 24 22"><circle cx="13" cy="9" r="7" fill="#f8e860" stroke="#8a8020"/><path d="M4 15L8 19" stroke="#666" stroke-width="3.5"/><circle cx="3.5" cy="18.5" r="1.5" fill="#444"/></svg>
<div class="t " style="left:36px;top:876.4px;font-size:11.6px;font-weight:bold">Visualization</div>
<div class="a" style="left:1px;top:893px;width:167px;height:22px;background:linear-gradient(#fefefe,#ececec 50%,#d4d4d4);border:1px solid #9a9a9a;box-sizing:border-box"></div>
<svg style="left:4px;top:893px;" width="24" height="22" viewBox="0 0 24 22"><path d="M3 6L14 3L21 6V16L14 19L3 16Z" fill="#b07848" stroke="#5a3a20"/><path d="M3 6L11 9L21 6M11 9V19" fill="none" stroke="#5a3a20"/><rect x="12" y="8" width="8" height="3" fill="#222"/></svg>
<div class="t " style="left:36px;top:898.4px;font-size:11.6px;font-weight:bold">Furn/Fixtures</div>
<div class="a" style="left:1px;top:915px;width:167px;height:22px;background:linear-gradient(#fefefe,#ececec 50%,#d4d4d4);border:1px solid #9a9a9a;box-sizing:border-box"></div>
<svg style="left:4px;top:915px;" width="24" height="22" viewBox="0 0 24 22"><path d="M2 18L14 5L17 8L5 21Z" fill="#e0e0e0" stroke="#888"/><path d="M12 18L21 4L23 5L14 19L12 20Z" fill="#2a60d0" stroke="#103080"/><path d="M21 4L23 2" stroke="#e03030" stroke-width="2"/></svg>
<div class="t " style="left:36px;top:920.4px;font-size:11.6px;font-weight:bold">Dims/Notes</div>
<div class="a" style="left:1px;top:937px;width:167px;height:22px;background:linear-gradient(#fefefe,#ececec 50%,#d4d4d4);border:1px solid #9a9a9a;box-sizing:border-box"></div>
<svg style="left:4px;top:937px;" width="24" height="22" viewBox="0 0 24 22"><path d="M2 5L14 2L22 5L10 8Z" fill="#e8e8e8" stroke="#666"/><path d="M9 8V17M5 18H15L20 16" stroke="#777" stroke-width="2.5" fill="none"/><path d="M18 6V15" stroke="#555" stroke-width="1.5"/></svg>
<div class="t " style="left:36px;top:942.4px;font-size:11.6px;font-weight:bold">Detailing</div>
<div class="a" style="left:1px;top:959px;width:167px;height:22px;background:linear-gradient(#fefefe,#ececec 50%,#d4d4d4);border:1px solid #9a9a9a;box-sizing:border-box"></div>
<svg style="left:4px;top:959px;" width="24" height="22" viewBox="0 0 24 22"><circle cx="8" cy="8" r="6" fill="#666" stroke="#222"/><rect x="8" y="9" width="8" height="7" fill="#bbb" stroke="#333" transform="rotate(40 12 12)"/><circle cx="15" cy="15" r="5.5" fill="#888" stroke="#222"/></svg>
<div class="t " style="left:36px;top:964.4px;font-size:11.6px;font-weight:bold">Fasteners</div>
<div class="a" style="left:1px;top:981px;width:167px;height:22px;background:linear-gradient(#fefefe,#ececec 50%,#d4d4d4);border:1px solid #9a9a9a;box-sizing:border-box"></div>
<svg style="left:4px;top:981px;" width="24" height="22" viewBox="0 0 24 22"><circle cx="12" cy="11" r="7.5" fill="#a8a8a8" stroke="#555" stroke-width="3" stroke-dasharray="2.6 1.8"/><circle cx="12" cy="11" r="6" fill="#a8a8a8" stroke="#555"/><circle cx="12" cy="11" r="2.2" fill="#eee" stroke="#555"/></svg>
<div class="t " style="left:36px;top:986.4px;font-size:11.6px;font-weight:bold">Machine Components</div>
<div class="a" style="left:1px;top:1010px;width:167px;height:19px;background:#f0f0f0;border:1px solid #a8a8a8;border-radius:2px;box-sizing:border-box"></div>
<div class="t " style="left:4px;top:1013.7px;font-size:12px;">Attributes</div>
<svg style="left:115px;top:1014.5px;" width="11" height="10" viewBox="0 0 11 10"><path d="M0 1H11M0 5H11M0 9H11" stroke="#111" stroke-width="1.8"/></svg>
<div class="t " style="left:135px;top:1013.5px;font-size:12.5px;font-weight:bold">?</div>
<svg style="left:152px;top:1015.0px;" width="9" height="9" viewBox="0 0 9 9"><path d="M0.5 0.5L8.5 8.5M8.5 0.5L0.5 8.5" stroke="#111" stroke-width="1.8"/></svg>
<div class="t " style="left:2px;top:1037.7px;font-size:11px;">Fill</div>
<div class="a" style="left:14px;top:1043px;width:151px;height:1px;background:#b8b8b8"></div>
<div class="a" style="left:1px;top:1056px;width:166px;height:25px;background:#f0f0f0;border:1px solid #777;box-sizing:border-box"></div>
<div class="a" style="left:8px;top:1062px;width:14px;height:14px;background:#2a2a2a;border:1px solid #000;box-sizing:border-box"></div>
<div class="t " style="left:60.0px;width:60px;text-align:center;top:1063.1px;font-size:11.3px;">Solid</div>
<svg style="left:152px;top:1067px;" width="9" height="5" viewBox="0 0 9 5"><path d="M0 0H9L4.5 5Z" fill="#111"/></svg>
<div class="a" style="left:1px;top:1085px;width:166px;height:26px;background:#fff;border:1px solid #777;box-sizing:border-box"></div>
<div class="a" style="left:1px;top:1114px;width:146px;height:25px;background:#000;border:1px solid #777;box-sizing:border-box"></div>
<div class="a" style="left:2px;top:1115px;width:22px;height:23px;background:linear-gradient(90deg,rgba(0,0,0,0),rgba(0,0,0,1)),repeating-conic-gradient(#c8c8c8 0 25%,#fff 0 50%) 0 0/10px 10px"></div>
<div class="t " style="right:2420px;top:1120.7px;font-size:13px;font-weight:bold;color:#fff;font-family:'Liberation Serif',serif">100%</div>
<div class="a" style="left:147px;top:1114px;width:20px;height:25px;background:#f0f0f0;border:1px solid #777;box-sizing:border-box"></div>
<svg style="left:155px;top:1120px;" width="4" height="14" viewBox="0 0 4 14"><circle cx="2" cy="2" r="1.3" fill="#111"/><circle cx="2" cy="7" r="1.3" fill="#111"/><circle cx="2" cy="12" r="1.3" fill="#111"/></svg>
<div class="t " style="left:2px;top:1147.7px;font-size:11px;">Pen</div>
<div class="a" style="left:22px;top:1153px;width:143px;height:1px;background:#b8b8b8"></div>
<div class="a" style="left:1px;top:1165px;width:166px;height:25px;background:#f0f0f0;border:1px solid #777;box-sizing:border-box"></div>
<div class="a" style="left:8px;top:1171px;width:14px;height:14px;background:#2a2a2a;border:1px solid #000;box-sizing:border-box"></div>
<div class="t " style="left:60.0px;width:60px;text-align:center;top:1172.1px;font-size:11.3px;">Solid</div>
<svg style="left:152px;top:1176px;" width="9" height="5" viewBox="0 0 9 5"><path d="M0 0H9L4.5 5Z" fill="#111"/></svg>
<div class="a" style="left:1px;top:1194px;width:166px;height:26px;background:#000;border:1px solid #777;box-sizing:border-box"></div>
<div class="a" style="left:1px;top:1223px;width:146px;height:25px;background:#000;border:1px solid #777;box-sizing:border-box"></div>
<div class="a" style="left:2px;top:1224px;width:22px;height:23px;background:linear-gradient(90deg,rgba(0,0,0,0),rgba(0,0,0,1)),repeating-conic-gradient(#c8c8c8 0 25%,#fff 0 50%) 0 0/10px 10px"></div>
<div class="t " style="right:2420px;top:1229.7px;font-size:13px;font-weight:bold;color:#fff;font-family:'Liberation Serif',serif">100%</div>
<div class="a" style="left:147px;top:1223px;width:20px;height:25px;background:#f0f0f0;border:1px solid #777;box-sizing:border-box"></div>
<svg style="left:155px;top:1229px;" width="4" height="14" viewBox="0 0 4 14"><circle cx="2" cy="2" r="1.3" fill="#111"/><circle cx="2" cy="7" r="1.3" fill="#111"/><circle cx="2" cy="12" r="1.3" fill="#111"/></svg>
<div class="a" style="left:1px;top:1252px;width:166px;height:26px;background:#fff;border:1px solid #777;box-sizing:border-box"></div>
<div class="a" style="left:5px;top:1265px;width:113px;height:1px;background:#000"></div>
<div class="t " style="right:2417px;top:1259.6px;font-size:11.3px;">0.05</div>
<div class="a" style="left:148px;top:1253px;width:18px;height:24px;background:#f0f0f0"></div>
<svg style="left:152px;top:1263px;" width="9" height="5" viewBox="0 0 9 5"><path d="M0 0H9L4.5 5Z" fill="#111"/></svg>
<div class="a" style="left:1px;top:1281px;width:73px;height:26px;background:#fff;border:1px solid #999;box-sizing:border-box"></div>
<div class="a" style="left:8px;top:1294px;width:47px;height:1px;background:#bbb"></div>
<div class="a" style="left:55px;top:1282px;width:18px;height:24px;background:#f0f0f0"></div>
<svg style="left:59px;top:1292px;" width="9" height="5" viewBox="0 0 9 5"><path d="M0 0H9L4.5 5Z" fill="#999"/></svg>
<div class="a" style="left:74px;top:1281px;width:21px;height:26px;background:#f0f0f0;border:1px solid #555;box-sizing:border-box"></div>
<svg style="left:78px;top:1284px;" width="12" height="20" viewBox="0 0 12 20"><rect x="3" y="3" width="6" height="7" rx="3" fill="none" stroke="#333" stroke-width="1.4"/><rect x="3" y="10" width="6" height="7" rx="3" fill="none" stroke="#333" stroke-width="1.4"/><path d="M1 4L11 17" stroke="#d02020" stroke-width="1.5"/></svg>
<div class="a" style="left:95px;top:1281px;width:72px;height:26px;background:#fff;border:1px solid #999;box-sizing:border-box"></div>
<div class="a" style="left:97px;top:1294px;width:43px;height:1px;background:#bbb"></div>
<div class="a" style="left:148px;top:1282px;width:18px;height:24px;background:#f0f0f0"></div>
<svg style="left:152px;top:1292px;" width="9" height="5" viewBox="0 0 9 5"><path d="M0 0H9L4.5 5Z" fill="#999"/></svg>
<div class="t " style="left:2px;top:1314.7px;font-size:11px;">Effects</div>
<div class="a" style="left:36px;top:1320px;width:129px;height:1px;background:#b8b8b8"></div>
<div class="a" style="left:1px;top:1339px;width:13px;height:13px;background:#fff;border:1px solid #333;box-sizing:border-box"></div>
<div class="t " style="left:16px;top:1339.7px;font-size:11px;">Shadow</div>
<div class="a" style="left:64px;top:1345px;width:48px;height:1px;background:#b8b8b8"></div>
<div class="a" style="left:115px;top:1333px;width:32px;height:25px;background:#000;border:1px solid #777;box-sizing:border-box"></div>
<div class="a" style="left:147px;top:1333px;width:20px;height:25px;background:#f0f0f0;border:1px solid #777;box-sizing:border-box"></div>
<svg style="left:155px;top:1339px;" width="4" height="14" viewBox="0 0 4 14"><circle cx="2" cy="2" r="1.3" fill="#111"/><circle cx="2" cy="7" r="1.3" fill="#111"/><circle cx="2" cy="12" r="1.3" fill="#111"/></svg>
<div class="a" style="left:172px;top:288px;width:2127px;height:22px;background:#f4f4f4;border:1px solid #a8a8a8;border-bottom:none;box-sizing:border-box"></div>
<svg style="left:172px;top:289px;" width="320" height="21" viewBox="0 0 320 21"><path d="M5 20L24 2H103L106 5L93 20Z" fill="#ececec" stroke="#b0b0b0"/><path d="M91 20L110 2H287Q290 2 290 5V20Z" fill="#f9f9f9" stroke="#a8a8a8"/><path d="M289 20V4Q289 2 292 2H312Q316 2 316 5V20" fill="#f0f0f0" stroke="#b8b8b8"/></svg>
<div class="t " style="left:208px;top:294.2px;font-size:12px;">Untitled 1</div>
<div class="t " style="left:287px;top:294.1px;font-size:12.2px;font-weight:bold">Parks2-Backup-202202...</div>
<svg style="left:448px;top:296px;" width="8" height="8" viewBox="0 0 8 8"><path d="M0.5 0.5L7.5 7.5M7.5 0.5L0.5 7.5" stroke="#111" stroke-width="1.6"/></svg>
<svg style="left:2281px;top:297px;" width="11" height="6" viewBox="0 0 11 6"><path d="M0 0H11L5.5 6Z" fill="#111"/></svg>
<div class="a" style="left:173px;top:310px;width:2126px;height:1064px;border:1px solid #a0a0a0;border-top:1px solid #909090;box-sizing:border-box;background:#f0f0f0"></div>
<div class="a" style="left:175px;top:312px;width:2121px;height:1060px;border:1px solid #808080;box-sizing:border-box"></div>
<div class="a" style="left:176px;top:337px;width:2118px;height:1px;background:#b8b8b8"></div>
<svg style="left:182px;top:317px;" width="16" height="14" viewBox="0 0 16 14"><path d="M0.5 7L7 0.5V4H15V10H7V13.5Z" fill="#aaa" stroke="#444"/></svg>
<svg style="left:203px;top:317px;" width="16" height="14" viewBox="0 0 16 14"><path d="M15.5 7L9 0.5V4H1V10H9V13.5Z" fill="#e8e8e8" stroke="#ccc"/></svg>
<div class="a" style="left:221px;top:316px;width:1px;height:18px;background:#c0c0c0"></div>
<svg style="left:225px;top:316px;" width="17" height="16" viewBox="0 0 17 16"><circle cx="3" cy="9" r="2" fill="none" stroke="#2a4a8a" stroke-width="1.3"/><circle cx="9" cy="5" r="2" fill="none" stroke="#2a4a8a" stroke-width="1.3"/><circle cx="9" cy="12" r="2" fill="none" stroke="#2a4a8a" stroke-width="1.3"/><circle cx="14" cy="3" r="2" fill="none" stroke="#2a4a8a" stroke-width="1.3"/><circle cx="14" cy="9" r="2" fill="none" stroke="#2a4a8a" stroke-width="1.3"/><path d="M5 9L7 5M5 9L7 12M11 5L12 3M11 5L12 9" stroke="#2a4a8a"/></svg>
<div class="a" style="left:248px;top:316px;width:206px;height:18px;background:#fff;border:1px solid #8c8c8c;box-sizing:border-box"></div>
<div class="t " style="left:253px;top:319.3px;font-size:11.8px;">None</div>
<div class="a" style="left:435px;top:317px;width:18px;height:16px;background:#f0f0f0;border-left:1px solid #c8c8c8;box-sizing:border-box"></div>
<svg style="left:440px;top:323.0px;" width="8" height="4" viewBox="0 0 8 4"><path d="M0 0H8L4 4Z" fill="#111"/></svg>
<div class="a" style="left:456px;top:316px;width:1px;height:18px;background:#c0c0c0"></div>
<svg style="left:462px;top:316px;" width="17" height="17" viewBox="0 0 17 17"><ellipse cx="8.5" cy="4" rx="7" ry="3" fill="#dde" stroke="#556"/><ellipse cx="8.5" cy="8.5" rx="7" ry="3" fill="#ccd" stroke="#556"/><ellipse cx="8.5" cy="13" rx="7" ry="3" fill="#bbc" stroke="#556"/></svg>
<svg style="left:482px;top:316px;" width="16" height="17" viewBox="0 0 16 17"><path d="M1 1H15V11L11 16H1Z" fill="#f4f4f4" stroke="#ccc"/></svg>
<div class="a" style="left:502px;top:316px;width:206px;height:18px;background:#fff;border:1px solid #8c8c8c;box-sizing:border-box"></div>
<div class="t " style="left:507px;top:319.3px;font-size:11.8px;">Fence</div>
<div class="a" style="left:689px;top:317px;width:18px;height:16px;background:#f0f0f0;border-left:1px solid #c8c8c8;box-sizing:border-box"></div>
<svg style="left:694px;top:323.0px;" width="8" height="4" viewBox="0 0 8 4"><path d="M0 0H8L4 4Z" fill="#111"/></svg>
<svg style="left:713px;top:315px;" width="19" height="19" viewBox="0 0 19 19"><rect x="0.5" y="0.5" width="18" height="18" fill="#f0c8f0" stroke="#903090"/><path d="M9.5 0.5V18.5M0.5 9.5H18.5" stroke="#903090"/><path d="M3 18L9.5 11L16 18Z" fill="#c0c0f0"/></svg>
<svg style="left:738px;top:315px;" width="19" height="19" viewBox="0 0 19 19"><rect x="0.5" y="0.5" width="18" height="18" fill="#f0c8f0" stroke="#903090"/><path d="M9.5 0.5V18.5M0.5 9.5H18.5" stroke="#903090"/><path d="M3 13L9.5 19L16 13Z" fill="#c0c0f0"/></svg>
<div class="a" style="left:762px;top:316px;width:206px;height:18px;background:#fff;border:1px solid #8c8c8c;box-sizing:border-box"></div>
<div class="t " style="left:767px;top:319.3px;font-size:11.8px;">Layer Plane</div>
<div class="a" style="left:949px;top:317px;width:18px;height:16px;background:#f0f0f0;border-left:1px solid #c8c8c8;box-sizing:border-box"></div>
<svg style="left:954px;top:323.0px;" width="8" height="4" viewBox="0 0 8 4"><path d="M0 0H8L4 4Z" fill="#111"/></svg>
<div class="a" style="left:970px;top:316px;width:1px;height:18px;background:#c0c0c0"></div>
<div class="a" style="left:977px;top:316px;width:40px;height:18px;background:#f4f4f4;border:1px solid #bbb;box-sizing:border-box"></div>
<svg style="left:979px;top:317px;" width="15" height="16" viewBox="0 0 15 16"><path d="M1 1H10L14 5V15H1Z" fill="#f8f8f8" stroke="#555"/><circle cx="7" cy="9" r="3.5" fill="#8aa0d0" stroke="#335"/></svg>
<svg style="left:1004px;top:323px;" width="7" height="4" viewBox="0 0 7 4"><path d="M0 0H7L3.5 4Z" fill="#111"/></svg>
<div class="a" style="left:1020px;top:316px;width:1px;height:18px;background:#c0c0c0"></div>
<svg style="left:1028px;top:316px;" width="19" height="18" viewBox="0 0 19 18"><rect x="1" y="2" width="17" height="6" fill="#eee" stroke="#444"/><rect x="1" y="10" width="17" height="6" fill="#eee" stroke="#444"/></svg>
<div class="a" style="left:1052px;top:316px;width:82px;height:18px;background:#fff;border-top:1px solid #8c8c8c;border-left:1px solid #8c8c8c;box-sizing:border-box"></div>
<div class="t " style="left:1055px;top:319.3px;font-size:11.8px;">1"=10'</div>
<div class="a" style="left:1137px;top:316px;width:1px;height:18px;background:#c0c0c0"></div>
<svg style="left:1143px;top:316px;" width="18" height="18" viewBox="0 0 18 18"><rect x="1" y="1" width="12" height="13" fill="#fff" stroke="#333"/><circle cx="8" cy="8" r="4" fill="none" stroke="#333" stroke-width="1.4"/><path d="M11 11L16 16" stroke="#c07030" stroke-width="2.5"/></svg>
<svg style="left:1167px;top:316px;" width="18" height="18" viewBox="0 0 18 18"><rect x="1" y="5" width="9" height="9" fill="#cde" stroke="#335"/><circle cx="10" cy="7" r="4" fill="none" stroke="#333" stroke-width="1.4"/><path d="M13 10L17 15" stroke="#c07030" stroke-width="2.5"/></svg>
<div class="a" style="left:1187px;top:316px;width:1px;height:18px;background:#c0c0c0"></div>
<svg style="left:1193px;top:317px;" width="14" height="15" viewBox="0 0 14 15"><circle cx="5" cy="5" r="4" fill="#fff" stroke="#333" stroke-width="1.4"/><path d="M8 8L13 14" stroke="#c07030" stroke-width="2.5"/></svg>
<div class="a" style="left:1215px;top:316px;width:82px;height:18px;background:#fff;border:1px solid #8c8c8c;box-sizing:border-box"></div>
<div class="t " style="left:1220px;top:319.3px;font-size:11.8px;">355%</div>
<div class="a" style="left:1278px;top:317px;width:18px;height:16px;background:#f0f0f0;border-left:1px solid #c8c8c8;box-sizing:border-box"></div>
<svg style="left:1283px;top:323.0px;" width="8" height="4" viewBox="0 0 8 4"><path d="M0 0H8L4 4Z" fill="#111"/></svg>
<div class="a" style="left:1299px;top:316px;width:1px;height:18px;background:#c0c0c0"></div>
<svg style="left:1302px;top:316px;" width="18" height="18" viewBox="0 0 18 18"><path d="M1 1H17V17L10 14H1Z" fill="#f0c8f0" stroke="#903090"/><path d="M9 1V15M1 8H17" stroke="#903090"/></svg>
<div class="a" style="left:1325px;top:315px;width:23px;height:20px;background:#cde4f7;border:1px solid #1a7ad8;box-sizing:border-box"></div>
<svg style="left:1327px;top:317px;" width="19" height="16" viewBox="0 0 19 16"><path d="M9.5 1L18 8L9.5 15L1 8Z" fill="#8ad0f0" stroke="#1a70b0" stroke-width="1.2"/><path d="M5 4.5L14 11.5M14 4.5L5 11.5" stroke="#1a70b0"/></svg>
<div class="a" style="left:1355px;top:316px;width:207px;height:18px;background:#fff;border:1px solid #8c8c8c;box-sizing:border-box"></div>
<div class="t " style="left:1360px;top:319.3px;font-size:11.8px;">Custom View</div>
<div class="a" style="left:1543px;top:317px;width:18px;height:16px;background:#f0f0f0;border-left:1px solid #c8c8c8;box-sizing:border-box"></div>
<svg style="left:1548px;top:323.0px;" width="8" height="4" viewBox="0 0 8 4"><path d="M0 0H8L4 4Z" fill="#111"/></svg>
<div class="a" style="left:1564px;top:316px;width:1px;height:18px;background:#c0c0c0"></div>
<svg style="left:1571px;top:316px;" width="19" height="18" viewBox="0 0 19 18"><path d="M3 1V8L12 15" stroke="#444" stroke-width="2" fill="none"/><path d="M3 8L12 15" stroke="#2a2" stroke-width="2"/><rect x="12" y="10" width="5" height="7" fill="#fff" stroke="#333"/><path d="M8 12L12 16" stroke="#d22" stroke-width="2"/></svg>
<div class="a" style="left:1595px;top:316px;width:52px;height:18px;background:#fff;border-top:1px solid #8c8c8c;border-left:1px solid #8c8c8c;box-sizing:border-box"></div>
<div class="t " style="left:1598px;top:319.3px;font-size:11.8px;">0.00&deg;</div>
<div class="a" style="left:1648px;top:316px;width:1px;height:18px;background:#c0c0c0"></div>
<svg style="left:1651px;top:317px;" width="17" height="16" viewBox="0 0 17 16"><rect x="0.5" y="0.5" width="16" height="15" fill="#eee" stroke="#555"/><rect x="2" y="2" width="5" height="5" fill="#999"/><rect x="9" y="2" width="6" height="5" fill="#bbb"/><rect x="9" y="9" width="6" height="5" fill="#999"/></svg>
<div class="a" style="left:1678px;top:316px;width:206px;height:18px;background:#fff;border:1px solid #8c8c8c;box-sizing:border-box"></div>
<div class="t " style="left:1683px;top:319.3px;font-size:11.8px;">Orthogonal</div>
<div class="a" style="left:1865px;top:317px;width:18px;height:16px;background:#f0f0f0;border-left:1px solid #c8c8c8;box-sizing:border-box"></div>
<svg style="left:1870px;top:323.0px;" width="8" height="4" viewBox="0 0 8 4"><path d="M0 0H8L4 4Z" fill="#111"/></svg>
<div class="a" style="left:1886px;top:316px;width:1px;height:18px;background:#c0c0c0"></div>
<div class="a" style="left:1889px;top:316px;width:41px;height:18px;background:#f4f4f4;border:1px solid #bbb;box-sizing:border-box"></div>
<div class="a" style="left:1911px;top:317px;width:1px;height:16px;background:#bbb"></div>
<svg style="left:1890px;top:317px;" width="20" height="16" viewBox="0 0 20 16"><ellipse cx="9" cy="10" rx="7" ry="5.5" fill="#a8b0e8" stroke="#223"/><path d="M15 8Q20 6 17 12" fill="none" stroke="#223"/></svg>
<svg style="left:1916px;top:322px;" width="9" height="5" viewBox="0 0 9 5"><path d="M0 0H9L4.5 5Z" fill="#111"/></svg>
<div class="a" style="left:1934px;top:316px;width:41px;height:18px;background:#fff;border:1px solid #bbb;box-sizing:border-box"></div>
<svg style="left:1935px;top:317px;" width="19" height="16" viewBox="0 0 19 16"><circle cx="5" cy="11" r="4" fill="#5c5" stroke="#333"/><circle cx="14" cy="11" r="4" fill="#e55" stroke="#333"/><path d="M2 8L5 2M17 8L14 2M9 10H10" stroke="#335" stroke-width="1.3"/></svg>
<svg style="left:1961px;top:322px;" width="7" height="4" viewBox="0 0 7 4"><path d="M0 0H7L3.5 4Z" fill="#111"/></svg>
<div class="a" style="left:1977px;top:316px;width:1px;height:18px;background:#c0c0c0"></div>
<div class="a" style="left:2264px;top:319px;width:25px;height:13px;background:#a8a8a8;border-radius:6px"></div>
<svg style="left:2274px;top:322px;" width="4" height="7" viewBox="0 0 4 7"><path d="M0 0L4 3.5L0 7Z" fill="#fff"/></svg>
<svg style="left:185px;top:342px;" width="25" height="24" viewBox="0 0 25 24"><path d="M2 20L12 8L18 3" stroke="#333" stroke-width="1" fill="none"/><circle cx="4" cy="18" r="2.5" fill="#fff" stroke="#444"/><circle cx="10" cy="11" r="2.5" fill="#fff" stroke="#444"/><circle cx="17" cy="17" r="6" fill="#e02020" stroke="#222"/><path d="M13 14L21 20" stroke="#fff" stroke-width="2.5"/></svg>
<svg style="left:222px;top:344px;" width="18" height="20" viewBox="0 0 18 20"><path d="M2 18L16 2" stroke="#444" stroke-width="1.5"/><circle cx="5" cy="15" r="2.5" fill="#fff" stroke="#444"/><circle cx="9" cy="10" r="2.5" fill="#fff" stroke="#444"/><circle cx="13" cy="6" r="2.5" fill="#fff" stroke="#444"/></svg>
<div class="a" style="left:251px;top:342px;width:31px;height:24px;background:#cde4f7;border:1px solid #1a7ad8;box-sizing:border-box"></div>
<svg style="left:254px;top:344px;" width="25" height="20" viewBox="0 0 25 20"><path d="M2 18L13 4M9 18L22 4" stroke="#444" stroke-width="1.3"/><circle cx="6" cy="13" r="2.5" fill="#fff" stroke="#444"/><circle cx="10" cy="9" r="2.5" fill="#fff" stroke="#444"/><circle cx="13" cy="13" r="2.5" fill="#fff" stroke="#444"/><circle cx="17" cy="9" r="2.5" fill="#fff" stroke="#444"/></svg>
<div class="a" style="left:287px;top:345px;width:1px;height:19px;background:#c0c0c0"></div>
<div class="a" style="left:296px;top:342px;width:31px;height:24px;background:#cde4f7;border:1px solid #1a7ad8;box-sizing:border-box"></div>
<svg style="left:299px;top:345px;" width="25" height="19" viewBox="0 0 25 19"><rect x="7" y="1" width="9" height="4" fill="#fff" stroke="#333"/><rect x="2" y="11" width="6" height="6" fill="#e0a060"/><rect x="12" y="11" width="6" height="6" fill="#e0a060"/><path d="M21 1V18" stroke="#4070c0" stroke-width="1.5"/></svg>
<div class="a" style="left:332px;top:345px;width:1px;height:19px;background:#c0c0c0"></div>
<div class="a" style="left:341px;top:342px;width:31px;height:24px;background:#cde4f7;border:1px solid #1a7ad8;box-sizing:border-box"></div>
<div class="a" style="left:347px;top:347px;width:19px;height:14px;border:2px solid #444;background:#e8eef8;box-sizing:border-box"></div>
<svg style="left:382px;top:345px;" width="21" height="19" viewBox="0 0 21 19"><ellipse cx="10" cy="8" rx="8.5" ry="6" fill="none" stroke="#444" stroke-width="1.4"/><path d="M4 12Q2 17 6 17" fill="none" stroke="#444" stroke-width="1.3"/></svg>
<svg style="left:414px;top:344px;" width="22" height="20" viewBox="0 0 22 20"><path d="M2 18L4 2L12 10L20 6L12 18Z" fill="none" stroke="#444" stroke-width="1.4"/></svg>
<div class="a" style="left:447px;top:345px;width:1px;height:19px;background:#c0c0c0"></div>
<div class="a" style="left:456px;top:342px;width:31px;height:24px;background:#cde4f7;border:1px solid #1a7ad8;box-sizing:border-box"></div>
<svg style="left:459px;top:344px;" width="25" height="21" viewBox="0 0 25 21"><rect x="2" y="2" width="16" height="8" fill="#b8c0d0" stroke="#555"/><path d="M3 20V10H17V20" fill="none" stroke="#c07030" stroke-width="3"/><path d="M21 2V19" stroke="#4070c0" stroke-width="1.5"/></svg>
<div class="a" style="left:492px;top:345px;width:1px;height:19px;background:#c0c0c0"></div>
<div class="t " style="left:501px;top:348.8px;font-size:10.8px;">Selection Tool: Rectangular Marquee Mode</div>
<svg style="left:1928px;top:344px;" width="26" height="21" viewBox="0 0 26 21"><circle cx="10" cy="9" r="6" fill="#d8dcf0" stroke="#445" stroke-width="1.5"/><path d="M2 18L20 2" stroke="#445" stroke-width="2"/><path d="M14 13L20 19" stroke="#445" stroke-width="2.5"/></svg>
<div class="a" style="left:1961px;top:343px;width:45px;height:24px;background:#f0f0f0;border:1px solid #b0b0b0;box-sizing:border-box"></div>
<div class="a" style="left:1987px;top:344px;width:1px;height:22px;background:#b0b0b0"></div>
<svg style="left:1963px;top:345px;" width="22" height="20" viewBox="0 0 22 20"><circle cx="11" cy="10" r="7" fill="#c8cce8" stroke="#335" stroke-width="2.5" stroke-dasharray="3 2"/><circle cx="11" cy="10" r="2" fill="none" stroke="#335"/></svg>
<svg style="left:1992px;top:353px;" width="9" height="5" viewBox="0 0 9 5"><path d="M0 0H9L4.5 5Z" fill="#111"/></svg>
<div class="a" style="left:2010px;top:343px;width:45px;height:24px;background:#f0f0f0;border:1px solid #b0b0b0;box-sizing:border-box"></div>
<div class="a" style="left:2036px;top:344px;width:1px;height:22px;background:#b0b0b0"></div>
<svg style="left:2012px;top:345px;" width="22" height="20" viewBox="0 0 22 20"><ellipse cx="10" cy="11" rx="8" ry="7" fill="#b8bce0" stroke="#335"/><path d="M4 18L18 4" stroke="#335" stroke-width="1.5"/></svg>
<svg style="left:2041px;top:353px;" width="9" height="5" viewBox="0 0 9 5"><path d="M0 0H9L4.5 5Z" fill="#111"/></svg>
<div class="a" style="left:2059px;top:343px;width:45px;height:24px;background:#f0f0f0;border:1px solid #b0b0b0;box-sizing:border-box"></div>
<div class="a" style="left:2085px;top:344px;width:1px;height:22px;background:#b0b0b0"></div>
<svg style="left:2061px;top:345px;" width="22" height="20" viewBox="0 0 22 20"><path d="M2 6L8 2L14 6V13L8 17L2 13Z" fill="#c8cce8" stroke="#335"/><rect x="10" y="10" width="10" height="9" fill="#b8bce0" stroke="#335"/><path d="M5 19L18 3" stroke="#335" stroke-width="1.3"/></svg>
<svg style="left:2090px;top:353px;" width="9" height="5" viewBox="0 0 9 5"><path d="M0 0H9L4.5 5Z" fill="#111"/></svg>
<svg style="left:2113px;top:346px;" width="19" height="19" viewBox="0 0 19 19"><rect x="1" y="4" width="13" height="12" fill="#282a48" stroke="#111"/><path d="M15 1V18" stroke="#445" stroke-width="2"/></svg>
<div class="a" style="left:2143px;top:343px;width:30px;height:24px;background:#cde4f7;border:1px solid #1a7ad8;box-sizing:border-box"></div>
<svg style="left:2148px;top:346px;" width="20" height="19" viewBox="0 0 20 19"><rect x="6" y="3" width="13" height="15" fill="#333"/><rect x="2" y="1" width="13" height="14" fill="#c8ccec" stroke="#334" stroke-width="1.2"/></svg>
<svg style="left:2182px;top:346px;" width="22" height="19" viewBox="0 0 22 19"><rect x="1" y="1" width="7" height="5" fill="#c8ccec" stroke="#223" stroke-width="1.5"/><rect x="12" y="1" width="7" height="5" fill="#c8ccec" stroke="#223" stroke-width="1.5"/><rect x="1" y="12" width="7" height="5" fill="#c8ccec" stroke="#223" stroke-width="1.5"/><rect x="12" y="12" width="7" height="5" fill="#c8ccec" stroke="#223" stroke-width="1.5"/></svg>
<svg style="left:2216px;top:345px;" width="26" height="21" viewBox="0 0 26 21"><path d="M1 11L6 6Q12 2 20 4L25 2Q25 9 20 14L12 19Q5 19 1 11Z" fill="#b0b4e0" stroke="#335" stroke-width="1.2"/></svg>
<div class="a" style="left:2264px;top:348px;width:25px;height:13px;background:#a8a8a8;border-radius:6px"></div>
<svg style="left:2274px;top:351px;" width="4" height="7" viewBox="0 0 4 7"><path d="M0 0L4 3.5L0 7Z" fill="#fff"/></svg>
<div class="a" style="left:176px;top:368px;width:2118px;height:1002px;background:#e9f2e9"></div>
<div class="a" style="left:176px;top:1369px;width:2118px;height:3px;background:#fff"></div>
<div class="a" style="left:1826px;top:369px;width:11px;height:14px;background:linear-gradient(90deg,#d07010,#f0a040,#d07010)"></div>
<div class="a" style="left:1868px;top:370px;width:23px;height:13px;background:#7d6a5a;border:1px solid #555;box-sizing:border-box"></div>
<div class="a" style="left:528px;top:597px;width:808px;height:650px;background:#fff;border-top:1px solid #555;border-left:1px solid #555;box-sizing:border-box"></div>
<div class="a" style="left:868px;top:753px;width:486px;height:494px;background:#2e76dc;border:1px solid #1a2a44;box-sizing:border-box"></div>
<div class="a" style="left:886px;top:768px;width:450px;height:153px;background:#173d77;border:1px solid #0a1a30;box-sizing:border-box"></div>
<div class="a" style="left:886px;top:921px;width:450px;height:326px;background:#fff;border-left:1px solid #0a1a30;box-sizing:border-box"></div>
<svg style="left:1537px;top:1087px;" width="25" height="160" viewBox="0 0 25 160"><rect x="0" y="0" width="25" height="160" fill="#7e3a2c"/><path d="M1 20H22" stroke="#7b7776" stroke-width="2"/><path d="M20 0V20" stroke="#7b7776" stroke-width="1.6"/><path d="M1 41H22" stroke="#7b7776" stroke-width="2"/><path d="M3 21V41" stroke="#7b7776" stroke-width="1.6"/><path d="M1 62H22" stroke="#7b7776" stroke-width="2"/><path d="M20 42V62" stroke="#7b7776" stroke-width="1.6"/><path d="M1 83H22" stroke="#7b7776" stroke-width="2"/><path d="M3 63V83" stroke="#7b7776" stroke-width="1.6"/><path d="M1 104H22" stroke="#7b7776" stroke-width="2"/><path d="M20 84V104" stroke="#7b7776" stroke-width="1.6"/><path d="M1 125H22" stroke="#7b7776" stroke-width="2"/><path d="M3 105V125" stroke="#7b7776" stroke-width="1.6"/><path d="M1 146H22" stroke="#7b7776" stroke-width="2"/><path d="M20 126V146" stroke="#7b7776" stroke-width="1.6"/><path d="M1 167H22" stroke="#7b7776" stroke-width="2"/><path d="M3 147V167" stroke="#7b7776" stroke-width="1.6"/><path d="M0.5 0V160M23.5 0V160" stroke="#2a1a14" stroke-width="1.5"/></svg>
<svg style="left:1561px;top:1087px;" width="91" height="283" viewBox="0 0 91 283"><rect width="91" height="283" fill="#c3bdb8"/><rect x="2" y="0" width="35" height="28" fill="#b8b3ae"/><rect x="40" y="10" width="22" height="40" fill="#cdc8c3"/><rect x="4" y="54" width="68" height="40" fill="#cbc6c1"/><rect x="4" y="96" width="17" height="38" fill="#b5b0ab"/><rect x="38" y="96" width="45" height="60" fill="#c9c4bf"/><rect x="2" y="138" width="35" height="18" fill="#bab5b0"/><path d="M37 0V49M60 9V49M2 28H37M37 9H91M2 49H91M14 49V129M83 49V219M2 89H83M37 89V170M2 129H37M37 150H83M72 170H91M72 170V283M72 209H91M72 249H91" stroke="#7c7878" stroke-width="1.6" fill="none"/></svg>
<svg style="left:1650px;top:1087px;" width="40" height="283" viewBox="0 0 40 283"><path d="M0 225H1.5Q4 262 14 283H0Z" fill="#c3bdb8"/><path d="M1 0V225Q4 262 14 283H36Q26 262 25 225V0Z" fill="#7e3a2c"/><path d="M3 20H24M3 41H24M3 62H24M3 83H24M3 104H24M3 125H24M3 146H24M3 167H24M3 188H24M3 209H25M5 230H27M8 251H30M12 272H33" stroke="#7b7776" stroke-width="2"/><path d="M22 0V20M4 20V41M22 41V62M4 62V83M22 83V104M4 104V125M22 125V146M4 146V167M22 167V188M4 188V209M22 209V230" stroke="#7b7776" stroke-width="1.5"/><path d="M1 0V225Q4 262 14 283M25 0V225Q26 262 36 283" fill="none" stroke="#2a1a14" stroke-width="1.6"/><path d="M25.5 53V230" stroke="#e01010" stroke-width="1.6"/></svg>
<div class="a" style="left:177px;top:730px;width:334px;height:162px;background:linear-gradient(90deg,#7c7c7c,#8a8a8a 50%,#8f8f8f);border-top:1px solid #444;border-right:1px solid #444;box-sizing:border-box"></div>
<div class="a" style="left:177px;top:892px;width:334px;height:17px;background:linear-gradient(#bdbdbd,#b5b5b5);border-top:1px solid #666;box-sizing:border-box"></div>
<div class="a" style="left:177px;top:909px;width:334px;height:164px;background:#636363;border-top:1px solid #333;border-bottom:1px solid #333;border-right:1px solid #333;box-sizing:border-box"></div>
<div class="a" style="left:509px;top:1273px;width:1091px;height:97px;background:linear-gradient(#858585,#8c8c8c);border-top:1px solid #444;border-left:1px solid #444;box-sizing:border-box"></div>
<div class="a" style="left:177px;top:701px;width:367px;height:10px;background:linear-gradient(#d7a592 0 1px,transparent 1px) 0 2px/100% 100% no-repeat,repeating-linear-gradient(90deg,#b9614a 0 21px,#d7a592 21px 22px);border-top:1px solid #4a2a20;box-sizing:border-box"></div>
<div class="a" style="left:177px;top:710px;width:356px;height:5px;background:#3a3f3b"></div>
<svg style="left:177px;top:715px;" width="351" height="15" viewBox="0 0 351 15"><filter id="pk1" x="0" y="0" width="100%" height="100%"><feTurbulence type="fractalNoise" baseFrequency="0.18" numOctaves="2" seed="21"/><feColorMatrix type="matrix" values="0 0 0 0 1  0 0 0 0 0.93  0 0 0 0 0.93  1.6 0 0 0 -0.75"/></filter><rect width="351" height="15" fill="#eda0a0"/><rect width="351" height="15" filter="url(#pk1)"/></svg>
<div class="a" style="left:533px;top:711px;width:11px;height:543px;background:repeating-linear-gradient(0deg,#b9614a 0 7px,#d7a592 7px 8px);border-right:2px solid #3a2420;box-sizing:border-box"></div>
<div class="a" style="left:542px;top:702px;width:2px;height:9px;background:#3a2420"></div>
<div class="a" style="left:528px;top:710px;width:5px;height:549px;background:linear-gradient(#3a3f3b 0 170px,#7a8c8c 170px)"></div>
<svg style="left:510px;top:715px;" width="18" height="558" viewBox="0 0 18 558"><filter id="pk2" x="0" y="0" width="100%" height="100%"><feTurbulence type="fractalNoise" baseFrequency="0.18" numOctaves="2" seed="22"/><feColorMatrix type="matrix" values="0 0 0 0 1  0 0 0 0 0.93  0 0 0 0 0.93  1.6 0 0 0 -0.75"/></filter><rect width="18" height="558" fill="#eda0a0"/><rect width="18" height="558" filter="url(#pk2)"/></svg>
<div class="a" style="left:509px;top:729px;width:1px;height:544px;background:#555"></div>
<div class="a" style="left:510px;top:729px;width:1px;height:343px;background:#fff"></div>
<div class="a" style="left:533px;top:1246px;width:1100px;height:8px;background:repeating-linear-gradient(90deg,#b9614a 0 21px,#d7a592 21px 22px);border-top:1px solid #4a2a20;box-sizing:border-box"></div>
<div class="a" style="left:528px;top:1253px;width:1094px;height:6px;background:#3a3f3b"></div>
<svg style="left:510px;top:1259px;" width="1091" height="14" viewBox="0 0 1091 14"><filter id="pk3" x="0" y="0" width="100%" height="100%"><feTurbulence type="fractalNoise" baseFrequency="0.18" numOctaves="2" seed="23"/><feColorMatrix type="matrix" values="0 0 0 0 1  0 0 0 0 0.93  0 0 0 0 0.93  1.6 0 0 0 -0.75"/></filter><rect width="1091" height="14" fill="#eda0a0"/><rect width="1091" height="14" filter="url(#pk3)"/></svg>
<svg style="left:1600px;top:1259px;" width="20" height="111" viewBox="0 0 20 111"><filter id="pk4" x="0" y="0" width="100%" height="100%"><feTurbulence type="fractalNoise" baseFrequency="0.18" numOctaves="2" seed="24"/><feColorMatrix type="matrix" values="0 0 0 0 1  0 0 0 0 0.93  0 0 0 0 0.93  1.6 0 0 0 -0.75"/></filter><rect width="20" height="111" fill="#eda0a0"/><rect width="20" height="111" filter="url(#pk4)"/></svg>
<div class="a" style="left:1619px;top:1253px;width:3px;height:117px;background:#3a3f3b"></div>
<div class="a" style="left:1622px;top:1246px;width:11px;height:124px;background:repeating-linear-gradient(0deg,#b9614a 0 7px,#d7a592 7px 8px);border-right:1px solid #4a3028;box-sizing:border-box"></div>
<svg style="left:1866px;top:1087px;" width="24" height="283" viewBox="0 0 24 283"><filter id="spn" color-interpolation-filters="sRGB" x="0" y="0" width="100%" height="100%"><feTurbulence type="fractalNoise" baseFrequency="0.3 0.15" numOctaves="2" seed="4"/><feColorMatrix type="matrix" values="0 0 0 0 0.3  0 0 0 0 0.24  0 0 0 0 0.2  5 0 0 0 -2.3"/></filter><filter id="spn2" color-interpolation-filters="sRGB" x="0" y="0" width="100%" height="100%"><feTurbulence type="fractalNoise" baseFrequency="0.3 0.15" numOctaves="2" seed="11"/><feColorMatrix type="matrix" values="0 0 0 0 0.75  0 0 0 0 0.7  0 0 0 0 0.62  -5 0 0 0 2.4"/></filter><rect width="24" height="283" fill="#8c7b6b"/><rect width="24" height="283" filter="url(#spn)"/><rect width="24" height="283" filter="url(#spn2)"/><path d="M0.5 0V283M23.5 0V283" stroke="#4a4038" stroke-width="1.2"/></svg>
<div class="a" style="left:1241px;top:382px;width:1051px;height:706px;box-shadow:0 0 12px 3px rgba(0,0,0,0.28);background:#f0f0f0"></div>
<div class="a" style="left:1241px;top:382px;width:1051px;height:706px;border:1px solid #6a6a6a;box-sizing:border-box;background:#f0f0f0"></div>
<div class="a" style="left:1242px;top:383px;width:1049px;height:30px;background:#fff"></div>
<div class="t " style="left:1250px;top:391.4px;font-size:11.7px;">Railing/Fence Settings</div>
<div class="t " style="left:2218px;top:391.2px;font-size:12px;">?</div>
<svg style="left:2263px;top:392px;" width="11" height="11" viewBox="0 0 11 11"><path d="M0.5 0.5L10.5 10.5M10.5 0.5L0.5 10.5" stroke="#111" stroke-width="1.1"/></svg>
<div class="a" style="left:1254px;top:420px;width:108px;height:569px;background:#fff;border:1px solid #828282;box-sizing:border-box"></div>
<div class="a" style="left:1256px;top:454px;width:104px;height:16px;background:#0078d7"></div>
<div class="t " style="left:1259px;top:423.9px;font-size:10.6px;color:#000">General</div>
<div class="t " style="left:1259px;top:440.1px;font-size:10.6px;color:#000">Top Rail</div>
<div class="t " style="left:1259px;top:456.3px;font-size:10.6px;color:#fff">Post</div>
<div class="t " style="left:1259px;top:472.5px;font-size:10.6px;color:#000">Frame/Panel</div>
<div class="t " style="left:1259px;top:488.7px;font-size:10.6px;color:#000">Miters</div>
<div class="t " style="left:1259px;top:504.9px;font-size:10.6px;color:#000">Attributes</div>
<div class="a" style="left:1371px;top:423px;width:593px;height:564px;border:1px solid #bcbcbc;box-sizing:border-box"></div>
<div class="a" style="left:1386px;top:413px;width:128px;height:20px;background:#fff;border:1px solid #7a7a7a;box-sizing:border-box"></div>
<div class="t " style="left:1391px;top:417.9px;font-size:10.6px;color:#000">Post</div>
<svg style="left:1499px;top:421.0px;" width="9" height="5" viewBox="0 0 9 5"><path d="M0.5 0.5L4.5 4.5L8.5 0.5" fill="none" stroke="#333" stroke-width="1"/></svg>
<div class="a" style="left:1383px;top:442.5px;width:13px;height:13.0px;background:#fff;border:1px solid #333;box-sizing:border-box"></div>
<svg style="left:1385px;top:444.5px;" width="9" height="8" viewBox="0 0 9 8"><path d="M0.5 4L3.3 7L8.5 0.8" fill="none" stroke="#222" stroke-width="1.3"/></svg>
<div class="t " style="left:1399px;top:443.9px;font-size:10.6px;">Display posts in 2D view</div>
<div class="t " style="left:1383px;top:468.9px;font-size:10.6px;">Post Height:</div>
<div class="a" style="left:1481px;top:463px;width:126px;height:21px;background:#fff;border:1px solid #cccccc;box-sizing:border-box"></div>
<div class="a" style="left:1483px;top:465px;width:105px;height:17px;background:#e6e6e6"></div>
<div class="t " style="left:1486px;top:468.4px;font-size:10.6px;color:#8a8a8a">Custom Height</div>
<svg style="left:1592px;top:471.5px;" width="9" height="5" viewBox="0 0 9 5"><path d="M0.5 0.5L4.5 4.5L8.5 0.5" fill="none" stroke="#aaa" stroke-width="1"/></svg>
<div class="a" style="left:1622px;top:463px;width:120px;height:21px;background:#fff;border:1px solid #7a7a7a;box-sizing:border-box"></div>
<div class="t " style="left:1626px;top:468.4px;font-size:10.6px;color:#000">3.00</div>
<div class="t " style="left:1383px;top:497.9px;font-size:10.6px;">Profile:</div>
<div class="a" style="left:1481px;top:493px;width:126px;height:20px;background:#fff;border:1px solid #7a7a7a;box-sizing:border-box"></div>
<div class="t " style="left:1486px;top:497.9px;font-size:10.6px;color:#000">Rectangular</div>
<svg style="left:1592px;top:501.0px;" width="9" height="5" viewBox="0 0 9 5"><path d="M0.5 0.5L4.5 4.5L8.5 0.5" fill="none" stroke="#333" stroke-width="1"/></svg>
<div class="t " style="left:1383px;top:523.9px;font-size:10.6px;">Width:</div>
<div class="a" style="left:1481px;top:519px;width:126px;height:20px;background:#fff;border:1px solid #7a7a7a;box-sizing:border-box"></div>
<div class="t " style="left:1485px;top:523.9px;font-size:10.6px;color:#000">.23</div>
<div class="t " style="left:1622px;top:523.9px;font-size:10.6px;">Height:</div>
<div class="a" style="left:1719px;top:519px;width:120px;height:20px;background:#fff;border:1px solid #7a7a7a;box-sizing:border-box"></div>
<div class="t " style="left:1723px;top:523.9px;font-size:10.6px;color:#000">.23</div>
<div class="a" style="left:1383px;top:648px;width:557px;height:142px;border:1px solid #bcbcbc;box-sizing:border-box"></div>
<div class="a" style="left:1389px;top:643px;width:53px;height:10px;background:#f0f0f0"></div>
<div class="t " style="left:1392px;top:643.9px;font-size:10.6px;">Fixed Post</div>
<div class="a" style="left:1395px;top:664.0px;width:13px;height:13.0px;background:#fff;border:1px solid #333;box-sizing:border-box"></div>
<svg style="left:1397px;top:666.0px;" width="9" height="8" viewBox="0 0 9 8"><path d="M0.5 4L3.3 7L8.5 0.8" fill="none" stroke="#222" stroke-width="1.3"/></svg>
<div class="t " style="left:1411px;top:665.9px;font-size:10.6px;">Place post at starting point</div>
<div class="t " style="left:1557px;top:664.9px;font-size:10.6px;">Distance:</div>
<div class="a" style="left:1655px;top:660px;width:120px;height:20px;background:#fff;border:1px solid #7a7a7a;box-sizing:border-box"></div>
<div class="t " style="left:1659px;top:664.9px;font-size:10.6px;color:#000">.00</div>
<div class="a" style="left:1395px;top:687.0px;width:13px;height:13.0px;background:#fff;border:1px solid #333;box-sizing:border-box"></div>
<svg style="left:1397px;top:689.0px;" width="9" height="8" viewBox="0 0 9 8"><path d="M0.5 4L3.3 7L8.5 0.8" fill="none" stroke="#222" stroke-width="1.3"/></svg>
<div class="t " style="left:1411px;top:688.9px;font-size:10.6px;">Place post at end point</div>
<div class="t " style="left:1557px;top:687.9px;font-size:10.6px;">Distance:</div>
<div class="a" style="left:1655px;top:683px;width:120px;height:20px;background:#fff;border:1px solid #7a7a7a;box-sizing:border-box"></div>
<div class="t " style="left:1659px;top:687.9px;font-size:10.6px;color:#000">.00</div>
<div class="a" style="left:1395px;top:707.0px;width:13px;height:13.0px;background:#fff;border:1px solid #c4c4c4;box-sizing:border-box"></div>
<div class="t " style="left:1411px;top:708.9px;font-size:10.6px;color:#8a8a8a">Place post at corner</div>
<div class="t " style="left:1395px;top:733.9px;font-size:10.6px;color:#8a8a8a">Align Corner Post Angle to:</div>
<div class="a" style="left:1655px;top:728px;width:120px;height:20px;background:#fff;border:1px solid #cccccc;box-sizing:border-box"></div>
<div class="a" style="left:1657px;top:730px;width:99px;height:16px;background:#e6e6e6"></div>
<div class="t " style="left:1660px;top:732.9px;font-size:10.6px;color:#8a8a8a">Leading Segment</div>
<svg style="left:1760px;top:736.0px;" width="9" height="5" viewBox="0 0 9 5"><path d="M0.5 0.5L4.5 4.5L8.5 0.5" fill="none" stroke="#aaa" stroke-width="1"/></svg>
<div class="a" style="left:1395px;top:765.0px;width:13px;height:13.0px;background:#fff;border:1px solid #c4c4c4;box-sizing:border-box"></div>
<div class="t " style="left:1411px;top:766.9px;font-size:10.6px;color:#8a8a8a">Place two posts at corner</div>
<div class="t " style="left:1557px;top:765.9px;font-size:10.6px;color:#8a8a8a">Distance:</div>
<div class="a" style="left:1655px;top:761px;width:120px;height:20px;background:#f0f0f0;border:1px solid #cccccc;box-sizing:border-box"></div>
<div class="t " style="left:1659px;top:765.9px;font-size:10.6px;color:#8a8a8a">3.28</div>
<div class="a" style="left:1383px;top:807px;width:557px;height:49px;border:1px solid #bcbcbc;box-sizing:border-box"></div>
<div class="a" style="left:1389px;top:802px;width:62px;height:10px;background:#f0f0f0"></div>
<div class="t " style="left:1392px;top:802.9px;font-size:10.6px;">Arrangement</div>
<div class="a" style="left:1395px;top:821px;width:126px;height:20px;background:#fff;border:1px solid #7a7a7a;box-sizing:border-box"></div>
<div class="t " style="left:1400px;top:825.9px;font-size:10.6px;color:#000">Approximate Distance</div>
<svg style="left:1506px;top:829.0px;" width="9" height="5" viewBox="0 0 9 5"><path d="M0.5 0.5L4.5 4.5L8.5 0.5" fill="none" stroke="#333" stroke-width="1"/></svg>
<div class="a" style="left:1542px;top:821px;width:120px;height:20px;background:#fff;border:1px solid #7a7a7a;box-sizing:border-box"></div>
<div class="t " style="left:1546px;top:825.9px;font-size:10.6px;color:#000">8.20</div>
<div class="a" style="left:1690px;top:820px;width:73px;height:21px;background:#e1e1e1;border:1px solid #adadad;box-sizing:border-box"></div>
<div class="t " style="left:1691.5px;width:70px;text-align:center;top:825.9px;font-size:10.6px;">Position...</div>
<div class="a" style="left:1383px;top:872px;width:557px;height:101px;border:1px solid #bcbcbc;box-sizing:border-box"></div>
<div class="a" style="left:1386px;top:866px;width:140px;height:14px;background:#f0f0f0"></div>
<div class="a" style="left:1388px;top:866.5px;width:13px;height:13.0px;background:#fff;border:1px solid #333;box-sizing:border-box"></div>
<div class="t " style="left:1404px;top:867.9px;font-size:10.6px;">Use fascia mount post</div>
<div class="t " style="left:1395px;top:890.9px;font-size:10.6px;color:#8a8a8a">Orientation:</div>
<div class="a" style="left:1493px;top:886px;width:126px;height:20px;background:#fff;border:1px solid #cccccc;box-sizing:border-box"></div>
<div class="a" style="left:1495px;top:888px;width:105px;height:16px;background:#e6e6e6"></div>
<div class="t " style="left:1498px;top:890.9px;font-size:10.6px;color:#8a8a8a">Left</div>
<svg style="left:1604px;top:894.0px;" width="9" height="5" viewBox="0 0 9 5"><path d="M0.5 0.5L4.5 4.5L8.5 0.5" fill="none" stroke="#aaa" stroke-width="1"/></svg>
<div class="t " style="left:1395px;top:915.9px;font-size:10.6px;color:#8a8a8a">(1) Height:</div>
<div class="a" style="left:1493px;top:911px;width:126px;height:20px;background:#f0f0f0;border:1px solid #cccccc;box-sizing:border-box"></div>
<div class="t " style="left:1497px;top:915.9px;font-size:10.6px;color:#8a8a8a">.66</div>
<div class="t " style="left:1395px;top:941.9px;font-size:10.6px;color:#8a8a8a">(2) Distance:</div>
<div class="a" style="left:1493px;top:936px;width:126px;height:20px;background:#f0f0f0;border:1px solid #cccccc;box-sizing:border-box"></div>
<div class="t " style="left:1497px;top:940.9px;font-size:10.6px;color:#8a8a8a">1.31</div>
<svg style="left:1668px;top:884px;" width="136" height="84" viewBox="0 0 136 84"><defs><linearGradient id="gb" x1="0" x2="1"><stop offset="0" stop-color="#e4e4e4"/><stop offset="0.6" stop-color="#c8c8c8"/><stop offset="1" stop-color="#7a7a7a"/></linearGradient><pattern id="hatch" width="3" height="3" patternUnits="userSpaceOnUse" patternTransform="rotate(45)"><rect width="3" height="3" fill="#222"/><rect width="1" height="3" fill="#888"/></pattern></defs><rect x="31" y="2" width="17" height="35" fill="#a8a8a8"/><path d="M31.5 2V37M47.5 2V37" stroke="#111" stroke-dasharray="2 1.5"/><path d="M31.5 37.5H47.5V45.5H119V63.5H31.5Z" fill="url(#gb)" stroke="#111" stroke-width="1.2"/><rect x="119" y="2" width="13" height="80" fill="url(#hatch)"/><circle cx="11" cy="50" r="7" fill="none" stroke="#5a5af0"/><text x="11" y="54" font-size="10" text-anchor="middle" fill="#5a5af0" font-family="Liberation Sans">1</text><path d="M25 37.5H21.5V63.5H25" fill="none" stroke="#5a5af0"/><path d="M18 50H21" stroke="#5a5af0"/><path d="M31.5 66V73.5H119" fill="none" stroke="#5a5af0"/><circle cx="75" cy="73.5" r="7" fill="#f0f0f0" stroke="#5a5af0"/><text x="75" y="77.5" font-size="10" text-anchor="middle" fill="#5a5af0" font-family="Liberation Sans">2</text></svg>
<div class="a" style="left:1974px;top:427px;width:304px;height:561px;border:1px solid #bcbcbc;box-sizing:border-box"></div>
<div class="a" style="left:1980px;top:422px;width:42px;height:10px;background:#f0f0f0"></div>
<div class="t " style="left:1983px;top:422.9px;font-size:10.6px;">Preview</div>
<div class="t " style="left:1986px;top:440.9px;font-size:10.6px;">View:</div>
<div class="a" style="left:2066px;top:436px;width:201px;height:20px;background:#fff;border:1px solid #7a7a7a;box-sizing:border-box"></div>
<svg style="left:2071px;top:438px;" width="21" height="16" viewBox="0 0 21 16"><path d="M1 8L10.5 1L20 8" fill="#6a7080" stroke="#333"/><rect x="3" y="7" width="15" height="8" fill="#e0b070" stroke="#333"/><rect x="6" y="9" width="2.5" height="6" fill="#444"/><rect x="13" y="9" width="2.5" height="6" fill="#444"/></svg>
<div class="t " style="left:2099px;top:440.9px;font-size:10.6px;">Right Isometric</div>
<svg style="left:2252px;top:444px;" width="9" height="5" viewBox="0 0 9 5"><path d="M0.5 0.5L4.5 4.5L8.5 0.5" fill="none" stroke="#333" stroke-width="1"/></svg>
<div class="t " style="left:1986px;top:469.9px;font-size:10.6px;">Render Mode:</div>
<div class="a" style="left:2066px;top:465px;width:201px;height:20px;background:#fff;border:1px solid #7a7a7a;box-sizing:border-box"></div>
<div class="t " style="left:2071px;top:469.9px;font-size:10.6px;color:#000">Wireframe</div>
<svg style="left:2252px;top:473.0px;" width="9" height="5" viewBox="0 0 9 5"><path d="M0.5 0.5L4.5 4.5L8.5 0.5" fill="none" stroke="#333" stroke-width="1"/></svg>
<div class="a" style="left:1986px;top:498px;width:281px;height:421px;background:#fff;border-top:1px solid #a0a0a0;border-left:1px solid #a0a0a0;box-sizing:border-box"></div>
<svg style="left:2060px;top:615px;" width="160" height="190" viewBox="0 0 160 190"><defs><pattern id="fs" width="2.6" height="10" patternUnits="userSpaceOnUse"><rect width="2.6" height="10" fill="#000"/><rect x="1.5" width="0.9" height="10" fill="#fff"/></pattern></defs><rect x="4" y="149" width="4" height="20" rx="2" fill="#000"/><polygon points="14,164 150,86 150,107 15,182" fill="url(#fs)" stroke="#000" stroke-width="1.5"/><polygon points="14,164 57,139 57,157 15,182" fill="#000"/><rect x="13" y="163" width="4" height="20" fill="#000"/><rect x="56" y="137" width="3.5" height="20" fill="#000"/><rect x="99" y="112" width="3.5" height="21" fill="#000"/><rect x="145" y="86" width="6" height="22" fill="#000"/><polygon points="116,67 150,86 146,98 112,80" fill="url(#fs)" stroke="#000" stroke-width="1.5"/><path d="M116 67 Q105 60 107 45 Q110 33 121 27 L124 35 Q115 40 114 50 Q114 63 122 73 Z" fill="#000"/><polygon points="121,27 141,36 141,42 124,46" fill="url(#fs)" stroke="#000" stroke-width="1.2"/><polygon points="117,5 141,18 141,36 117,24" fill="#000"/><rect x="117" y="5" width="3.5" height="20" fill="#000"/><rect x="139" y="18" width="3" height="18" fill="#000"/></svg>
<div class="a" style="left:1254px;top:1011px;width:1024px;height:27px;border:1px solid #a8a8a8;box-sizing:border-box"></div>
<div class="t " style="left:1260px;top:1019.9px;font-size:10.6px;">For Help, press F1 or click the ? icon.</div>
<div class="a" style="left:2115px;top:1051px;width:73px;height:21px;background:#e1e1e1;border:2px solid #0078d7;box-sizing:border-box"></div>
<div class="t " style="left:2121.5px;width:60px;text-align:center;top:1056.4px;font-size:10.6px;">OK</div>
<div class="a" style="left:2205px;top:1051px;width:73px;height:21px;background:#e1e1e1;border:1px solid #adadad;box-sizing:border-box"></div>
<div class="t " style="left:2211.5px;width:60px;text-align:center;top:1056.4px;font-size:10.6px;">Cancel</div>
<div class="a" style="left:2299px;top:288px;width:1px;height:1086px;background:#c8c8c8"></div>
<div class="a" style="left:2305px;top:288px;width:255px;height:19px;background:#9ab4d4"></div>
<div class="t " style="left:2309px;top:292.0px;font-size:12.4px;">Object Info - Shape</div>
<svg style="left:2508px;top:293px;" width="10" height="10" viewBox="0 0 10 10"><path d="M0 1H10M0 5H10M0 9H10" stroke="#111" stroke-width="1.8"/></svg>
<div class="t " style="left:2527px;top:292.0px;font-size:12.5px;font-weight:bold">?</div>
<svg style="left:2545px;top:294px;" width="8" height="8" viewBox="0 0 8 8"><path d="M0.5 0.5L7.5 7.5M7.5 0.5L0.5 7.5" stroke="#111" stroke-width="1.8"/></svg>
<div class="a" style="left:2305px;top:308px;width:255px;height:25px;background:#f7f7f7"></div>
<div class="a" style="left:2307px;top:312px;width:46px;height:22px;background:#f0f0f0"></div>
<div class="a" style="left:2353px;top:312px;width:1px;height:21px;background:#111"></div>
<div class="a" style="left:2391px;top:314px;width:1px;height:15px;background:#aaa"></div>
<div class="a" style="left:2443px;top:314px;width:1px;height:15px;background:#aaa"></div>
<div class="t " style="left:2313px;top:316.1px;font-size:12.3px;">Shape</div>
<div class="t " style="left:2360px;top:316.1px;font-size:12.3px;">Data</div>
<div class="t " style="left:2398px;top:316.1px;font-size:12.3px;">Render</div>
<div class="a" style="left:2305px;top:333px;width:255px;height:496px;background:#f0f0f0;border-left:1px solid #a0a0a0;border-bottom:1px solid #a0a0a0;box-sizing:border-box"></div>
<div class="a" style="left:2308px;top:338px;width:249px;height:21px;background:#f0f0f0;border:1px solid #555;box-sizing:border-box"></div>
<div class="t " style="left:2312px;top:341.7px;font-size:13px;font-weight:bold">Railing/Fence</div>
<div class="a" style="left:2308px;top:362px;width:249px;height:440px;border:1px solid #a8a8a8;box-sizing:border-box"></div>
<div class="t " style="left:2313px;top:367.7px;font-size:11px;">Class:</div>
<div class="a" style="left:2347px;top:365px;width:208px;height:16px;background:#fff;border:1px solid #8a8a8a;box-sizing:border-box"></div>
<div class="a" style="left:2536px;top:366px;width:18px;height:14px;background:#f0f0f0"></div>
<svg style="left:2543px;top:372.0px;" width="6" height="3" viewBox="0 0 6 3"><path d="M0 0H6L3 3Z" fill="#111"/></svg>
<div class="t " style="left:2351px;top:367.7px;font-size:11px;">None</div>
<div class="t " style="left:2313px;top:386.7px;font-size:11px;">Layer:</div>
<div class="a" style="left:2348px;top:384px;width:207px;height:16px;background:#fff;border:1px solid #8a8a8a;box-sizing:border-box"></div>
<div class="a" style="left:2536px;top:385px;width:18px;height:14px;background:#f0f0f0"></div>
<svg style="left:2543px;top:391.0px;" width="6" height="3" viewBox="0 0 6 3"><path d="M0 0H6L3 3Z" fill="#111"/></svg>
<div class="t " style="left:2352px;top:386.7px;font-size:11px;">Fence</div>
<div class="a" style="left:2310px;top:402px;width:246px;height:1px;background:#b0b0b0"></div>
<div class="a" style="left:2314px;top:405px;width:26px;height:20px;background:#a8d0f0;border:1px solid #1a7ad8;box-sizing:border-box"></div>
<svg style="left:2316px;top:408px;" width="22" height="14" viewBox="0 0 22 14"><path d="M11 1L21 7L11 13L1 7Z" fill="#6cc8f0" stroke="#30a0d8"/><path d="M6 4L16 10M16 4L6 10" stroke="#fff" stroke-width="1.5"/></svg>
<svg style="left:2318px;top:429px;" width="17" height="20" viewBox="0 0 17 20"><path d="M1 1H16V17L12 19L1 15Z" fill="#f0b0e0" stroke="#e080c8"/><path d="M8 1V17M1 8H16" stroke="#fff" stroke-width="1.5"/><circle cx="8" cy="8" r="1.5" fill="#e02020"/></svg>
<div class="t " style="left:2353px;top:405.7px;font-size:11px;">X:</div>
<div class="a" style="left:2378px;top:403px;width:177px;height:17px;background:#fff;border:1px solid #8a8a8a;box-sizing:border-box"></div>
<div class="t " style="left:2382px;top:406.2px;font-size:11px;">18.81</div>
<div class="t " style="left:2353px;top:424.7px;font-size:11px;">Y:</div>
<div class="a" style="left:2378px;top:422px;width:177px;height:17px;background:#fff;border:1px solid #8a8a8a;box-sizing:border-box"></div>
<div class="t " style="left:2382px;top:425.2px;font-size:11px;">31.57</div>
<div class="t " style="left:2353px;top:443.7px;font-size:11px;">Z:</div>
<div class="a" style="left:2378px;top:441px;width:177px;height:17px;background:#fff;border:1px solid #8a8a8a;box-sizing:border-box"></div>
<div class="t " style="left:2382px;top:444.2px;font-size:11px;">250.25</div>
<div class="a" style="left:2310px;top:459px;width:246px;height:1px;background:#b0b0b0"></div>
<div class="t " style="left:2314px;top:462.7px;font-size:11px;">Rotation:</div>
<div class="a" style="left:2398px;top:460px;width:157px;height:17px;background:#fff;border:1px solid #8a8a8a;box-sizing:border-box"></div>
<div class="t " style="left:2402px;top:463.2px;font-size:11px;">0.00&deg;</div>
<div class="a" style="left:2311px;top:478px;width:244px;height:17px;background:#e5f1fb;border:1px solid #0078d7;box-sizing:border-box"></div>
<div class="t " style="left:2383.0px;width:100px;text-align:center;top:481.7px;font-size:11px;">Settings...</div>
<div class="t " style="left:2313px;top:500.7px;font-size:11px;">Component:</div>
<div class="a" style="left:2398px;top:498px;width:157px;height:17px;background:#fff;border:1px solid #8a8a8a;box-sizing:border-box"></div>
<div class="a" style="left:2536px;top:499px;width:18px;height:15px;background:#f0f0f0"></div>
<svg style="left:2543px;top:505.5px;" width="6" height="3" viewBox="0 0 6 3"><path d="M0 0H6L3 3Z" fill="#111"/></svg>
<div class="t " style="left:2402px;top:501.2px;font-size:11px;">2D and 3D</div>
<div class="t " style="left:2313px;top:519.7px;font-size:11px;">Offset from Path:</div>
<div class="a" style="left:2398px;top:517px;width:157px;height:17px;background:#fff;border:1px solid #8a8a8a;box-sizing:border-box"></div>
<div class="t " style="left:2402px;top:520.2px;font-size:11px;">.00</div>
<div class="t " style="left:2315px;top:538.1px;font-size:12.3px;font-weight:bold">Top Rail</div>
<div class="a" style="left:2366px;top:543px;width:189px;height:1px;background:#b8b8b8"></div>
<div class="a" style="left:2312px;top:557px;width:13px;height:13px;background:#fff;border:1px solid #333;box-sizing:border-box"></div>
<div class="t " style="left:2331px;top:557.7px;font-size:11px;">Top Rail</div>
<div class="t " style="left:2315px;top:576.1px;font-size:12.3px;font-weight:bold">Post</div>
<div class="a" style="left:2344px;top:581px;width:211px;height:1px;background:#b8b8b8"></div>
<div class="t " style="left:2314px;top:595.7px;font-size:11px;">Post Height:</div>
<div class="a" style="left:2398px;top:593px;width:157px;height:17px;background:#fff;border:1px solid #8a8a8a;box-sizing:border-box"></div>
<div class="t " style="left:2402px;top:596.2px;font-size:11px;">3.00</div>
<div class="a" style="left:2312px;top:614px;width:13px;height:13px;background:#fff;border:1px solid #333;box-sizing:border-box"></div>
<svg style="left:2314px;top:616px;" width="9" height="8" viewBox="0 0 9 8"><path d="M0.5 4L3.3 7L8.5 0.8" fill="none" stroke="#222" stroke-width="1.2"/></svg>
<div class="t " style="left:2331px;top:614.7px;font-size:11px;">2D-view with post</div>
<div class="a" style="left:2311px;top:630px;width:244px;height:17px;background:#e1e1e1;border:1px solid #adadad;box-sizing:border-box"></div>
<div class="t " style="left:2383.0px;width:100px;text-align:center;top:633.2px;font-size:11px;">Position...</div>
<div class="t " style="left:2315px;top:652.1px;font-size:12.3px;font-weight:bold">Frame</div>
<div class="a" style="left:2353px;top:657px;width:202px;height:1px;background:#b8b8b8"></div>
<div class="a" style="left:2312px;top:671px;width:13px;height:13px;background:#fff;border:1px solid #333;box-sizing:border-box"></div>
<svg style="left:2314px;top:673px;" width="9" height="8" viewBox="0 0 9 8"><path d="M0.5 4L3.3 7L8.5 0.8" fill="none" stroke="#222" stroke-width="1.2"/></svg>
<div class="t " style="left:2331px;top:671.7px;font-size:11px;">Frame</div>
<div class="a" style="left:2310px;top:694px;width:246px;height:1px;background:#b0b0b0"></div>
<div class="t " style="left:2314px;top:708.7px;font-size:11px;">Length:</div>
<div class="t " style="left:2402px;top:708.7px;font-size:11px;">58.87</div>
<div class="t " style="left:2314px;top:727.7px;font-size:11px;">Vertices:</div>
<div class="t " style="left:2402px;top:727.7px;font-size:11px;">10</div>
<div class="t " style="left:2314px;top:746.7px;font-size:11px;">Perim:</div>
<div class="t " style="left:2402px;top:746.7px;font-size:11px;">58.87</div>
<div class="t " style="left:2314px;top:765.7px;font-size:11px;">Area:</div>
<div class="t " style="left:2402px;top:765.7px;font-size:11px;">238.965 sq ft</div>
<div class="t " style="left:2313px;top:810.7px;font-size:11px;">Name:</div>
<div class="a" style="left:2347px;top:807px;width:210px;height:18px;background:#fff;border:1px solid #8a8a8a;box-sizing:border-box"></div>
<div class="t " style="left:2351px;top:810.7px;font-size:11px;"></div>
<div class="a" style="left:2306px;top:836px;width:253px;height:17px;background:#f0f0f0;border:1px solid #a0a0a0;box-sizing:border-box"></div>
<div class="t " style="left:2309px;top:838.2px;font-size:12px;">Navigation - Design Layers</div>
<svg style="left:2508px;top:839px;" width="10" height="10" viewBox="0 0 10 10"><path d="M0 1H10M0 5H10M0 9H10" stroke="#111" stroke-width="1.8"/></svg>
<div class="t " style="left:2527px;top:838.0px;font-size:12.5px;font-weight:bold">?</div>
<svg style="left:2545px;top:840px;" width="8" height="8" viewBox="0 0 8 8"><path d="M0.5 0.5L7.5 7.5M7.5 0.5L0.5 7.5" stroke="#111" stroke-width="1.8"/></svg>
<div class="a" style="left:2305px;top:853px;width:255px;height:25px;background:#f7f7f7"></div>
<div class="a" style="left:2337px;top:857px;width:27px;height:22px;background:#f0f0f0"></div>
<div class="a" style="left:2364px;top:857px;width:1px;height:21px;background:#111"></div>
<div class="a" style="left:2393px;top:860px;width:1px;height:15px;background:#aaa"></div>
<div class="a" style="left:2422px;top:860px;width:1px;height:15px;background:#aaa"></div>
<div class="a" style="left:2451px;top:860px;width:1px;height:15px;background:#aaa"></div>
<div class="a" style="left:2480px;top:860px;width:1px;height:15px;background:#aaa"></div>
<svg style="left:2311px;top:859px;" width="18" height="15" viewBox="0 0 18 15"><circle cx="3" cy="9" r="2" fill="none" stroke="#2a4a8a" stroke-width="1.3"/><circle cx="9" cy="5" r="2" fill="none" stroke="#2a4a8a" stroke-width="1.3"/><circle cx="9" cy="12" r="2" fill="none" stroke="#2a4a8a" stroke-width="1.3"/><circle cx="15" cy="3" r="2" fill="none" stroke="#2a4a8a" stroke-width="1.3"/><circle cx="15" cy="9" r="2" fill="none" stroke="#2a4a8a" stroke-width="1.3"/></svg>
<svg style="left:2341px;top:859px;" width="17" height="15" viewBox="0 0 17 15"><ellipse cx="8.5" cy="3.5" rx="7" ry="2.5" fill="none" stroke="#666"/><ellipse cx="8.5" cy="7.5" rx="7" ry="2.5" fill="none" stroke="#666"/><ellipse cx="8.5" cy="11.5" rx="7" ry="2.5" fill="none" stroke="#666"/></svg>
<svg style="left:2369px;top:859px;" width="17" height="15" viewBox="0 0 17 15"><path d="M1 1H16V10L11 14H1Z" fill="#fff" stroke="#333" stroke-width="1.3"/></svg>
<svg style="left:2397px;top:859px;" width="17" height="15" viewBox="0 0 17 15"><path d="M3 12L8 4L14 12Z" fill="#b8b8f0" stroke="#446"/><path d="M1 4V1H4M13 1H16V4M1 11V14H4M13 14H16V11" fill="none" stroke="#4466aa"/></svg>
<svg style="left:2426px;top:859px;" width="16" height="15" viewBox="0 0 16 15"><path d="M1 1H11L15 5V14H1Z" fill="#fff" stroke="#333"/><circle cx="8" cy="8" r="3.5" fill="#8aa0d0" stroke="#335"/></svg>
<svg style="left:2455px;top:859px;" width="18" height="15" viewBox="0 0 18 15"><path d="M5 1H13L17 5V14H5Z" fill="#fff" stroke="#333"/><path d="M1 8Q4 3 9 6M9 6L7 3M9 6L6 8M12 8Q9 13 4 10" fill="none" stroke="#333" stroke-width="1.2"/></svg>
<div class="a" style="left:2305px;top:878px;width:255px;height:493px;background:#f0f0f0;border-left:1px solid #a0a0a0;box-sizing:border-box"></div>
<div class="t " style="left:2313px;top:896.7px;font-size:11px;">Layer Options:</div>
<div class="a" style="left:2386px;top:890px;width:171px;height:23px;background:#fff;border:1px solid #8a8a8a;box-sizing:border-box"></div>
<div class="t " style="left:2390px;top:896.7px;font-size:11px;">Show/Snap/Modify Others</div>
<div class="a" style="left:2539px;top:891px;width:17px;height:21px;background:#f0f0f0"></div>
<svg style="left:2544px;top:901px;" width="6" height="3" viewBox="0 0 6 3"><path d="M0 0H6L3 3Z" fill="#111"/></svg>
<div class="t " style="left:2313px;top:929.7px;font-size:11px;">Filter:</div>
<div class="a" style="left:2386px;top:923px;width:171px;height:23px;background:#fff;border:1px solid #8a8a8a;box-sizing:border-box"></div>
<div class="t " style="left:2390px;top:929.7px;font-size:11px;">&lt;All Layers&gt;</div>
<div class="a" style="left:2539px;top:924px;width:17px;height:21px;background:#f0f0f0"></div>
<svg style="left:2544px;top:934px;" width="6" height="3" viewBox="0 0 6 3"><path d="M0 0H6L3 3Z" fill="#111"/></svg>
<div class="a" style="left:2308px;top:957px;width:249px;height:22px;background:#fff;border:1px solid #a8a8a8;border-top-color:#777;box-sizing:border-box"></div>
<div class="t " style="left:2312px;top:962.7px;font-size:11px;color:#888">Search</div>
<svg style="left:2538px;top:960px;" width="15" height="15" viewBox="0 0 15 15"><circle cx="9.5" cy="5.5" r="4.5" fill="none" stroke="#4a6aa8" stroke-width="1.4"/><path d="M6.5 8.5L1.5 14" stroke="#4a6aa8" stroke-width="1.6"/></svg>
<div class="a" style="left:2309px;top:990px;width:248px;height:380px;background:#fff;border:1px solid #a0a0a0;box-sizing:border-box"></div>
<div class="a" style="left:2310px;top:991px;width:246px;height:21px;background:#f0f0f0;border-bottom:1px solid #888;box-sizing:border-box"></div>
<div class="a" style="left:2311px;top:992px;width:1px;height:20px;background:#777"></div>
<div class="a" style="left:2359px;top:992px;width:1px;height:20px;background:#777"></div>
<div class="a" style="left:2381px;top:992px;width:1px;height:20px;background:#777"></div>
<div class="a" style="left:2487px;top:992px;width:1px;height:20px;background:#777"></div>
<div class="a" style="left:2512px;top:992px;width:1px;height:20px;background:#777"></div>
<div class="t " style="left:2316px;top:995.7px;font-size:11px;">Visibility</div>
<div class="t " style="left:2387px;top:995.7px;font-size:11px;">Design Layer</div>
<div class="t " style="left:2490px;top:996.7px;font-size:9px;">&#8942;</div>
<svg style="left:2497px;top:998px;" width="8" height="5" viewBox="0 0 8 5"><path d="M0.5 4.5L4 1L7.5 4.5" fill="none" stroke="#333"/></svg>
<div class="a" style="left:2327px;top:1012px;width:1px;height:349px;background:#444"></div>
<div class="a" style="left:2343px;top:1012px;width:1px;height:349px;background:#444"></div>
<div class="a" style="left:2359px;top:1012px;width:1px;height:349px;background:#444"></div>
<div class="a" style="left:2311px;top:1012px;width:1px;height:349px;background:#444"></div>
<div class="t " style="left:2387px;top:1015.7px;font-size:11px;">Fill Calculations</div>
<div class="t " style="right:49px;top:1015.7px;font-size:11px;">1</div>
<svg style="left:2332px;top:1017px;" width="8" height="8" viewBox="0 0 8 8"><path d="M0.5 0.5L7.5 7.5M7.5 0.5L0.5 7.5" stroke="#111" stroke-width="1.6"/></svg>
<div class="t " style="left:2387px;top:1032.7px;font-size:11px;">Patio Alternate 1</div>
<div class="t " style="right:49px;top:1032.7px;font-size:11px;">2</div>
<svg style="left:2332px;top:1034px;" width="8" height="8" viewBox="0 0 8 8"><path d="M0.5 0.5L7.5 7.5M7.5 0.5L0.5 7.5" stroke="#111" stroke-width="1.6"/></svg>
<div class="t " style="left:2387px;top:1049.7px;font-size:11px;">Patio alternate 2</div>
<div class="t " style="right:49px;top:1049.7px;font-size:11px;">3</div>
<svg style="left:2332px;top:1051px;" width="8" height="8" viewBox="0 0 8 8"><path d="M0.5 0.5L7.5 7.5M7.5 0.5L0.5 7.5" stroke="#111" stroke-width="1.6"/></svg>
<div class="t " style="left:2387px;top:1066.7px;font-size:11px;">Walkway</div>
<div class="t " style="right:49px;top:1066.7px;font-size:11px;">4</div>
<svg style="left:2313px;top:1068px;" width="13" height="9" viewBox="0 0 13 9"><path d="M0.5 4.5Q6.5 -2 12.5 4.5Q6.5 11 0.5 4.5Z" fill="#fff" stroke="#555"/><circle cx="6.5" cy="4.5" r="2.2" fill="#6a7fa8"/></svg>
<div class="t " style="left:2387px;top:1083.7px;font-size:11px;">Landscape Steps</div>
<div class="t " style="right:49px;top:1083.7px;font-size:11px;">5</div>
<svg style="left:2313px;top:1085px;" width="13" height="9" viewBox="0 0 13 9"><path d="M0.5 4.5Q6.5 -2 12.5 4.5Q6.5 11 0.5 4.5Z" fill="#fff" stroke="#555"/><circle cx="6.5" cy="4.5" r="2.2" fill="#6a7fa8"/></svg>
<div class="t " style="left:2387px;top:1100.7px;font-size:11px;">Deck Lattice</div>
<div class="t " style="right:49px;top:1100.7px;font-size:11px;">6</div>
<svg style="left:2313px;top:1102px;" width="13" height="9" viewBox="0 0 13 9"><path d="M0.5 4.5Q6.5 -2 12.5 4.5Q6.5 11 0.5 4.5Z" fill="#fff" stroke="#555"/><circle cx="6.5" cy="4.5" r="2.2" fill="#6a7fa8"/></svg>
<div class="t " style="left:2387px;top:1117.7px;font-size:11px;">Building</div>
<div class="t " style="right:49px;top:1117.7px;font-size:11px;">7</div>
<svg style="left:2313px;top:1119px;" width="13" height="9" viewBox="0 0 13 9"><path d="M0.5 4.5Q6.5 -2 12.5 4.5Q6.5 11 0.5 4.5Z" fill="#fff" stroke="#555"/><circle cx="6.5" cy="4.5" r="2.2" fill="#6a7fa8"/></svg>
<div class="t " style="left:2387px;top:1134.7px;font-size:11px;">Porch</div>
<div class="t " style="right:49px;top:1134.7px;font-size:11px;">8</div>
<svg style="left:2313px;top:1136px;" width="13" height="9" viewBox="0 0 13 9"><path d="M0.5 4.5Q6.5 -2 12.5 4.5Q6.5 11 0.5 4.5Z" fill="#fff" stroke="#555"/><circle cx="6.5" cy="4.5" r="2.2" fill="#6a7fa8"/></svg>
<div class="t " style="left:2387px;top:1151.7px;font-size:11px;">Grading</div>
<div class="t " style="right:49px;top:1151.7px;font-size:11px;">9</div>
<svg style="left:2332px;top:1153px;" width="8" height="8" viewBox="0 0 8 8"><path d="M0.5 0.5L7.5 7.5M7.5 0.5L0.5 7.5" stroke="#111" stroke-width="1.6"/></svg>
<div class="t " style="left:2387px;top:1168.7px;font-size:11px;">Septic</div>
<div class="t " style="right:49px;top:1168.7px;font-size:11px;">10</div>
<svg style="left:2313px;top:1170px;" width="13" height="9" viewBox="0 0 13 9"><path d="M0.5 4.5Q6.5 -2 12.5 4.5Q6.5 11 0.5 4.5Z" fill="#fff" stroke="#555"/><circle cx="6.5" cy="4.5" r="2.2" fill="#6a7fa8"/></svg>
<div class="t " style="left:2387px;top:1185.7px;font-size:11px;">1st floor slab</div>
<div class="t " style="right:49px;top:1185.7px;font-size:11px;">11</div>
<svg style="left:2313px;top:1187px;" width="13" height="9" viewBox="0 0 13 9"><path d="M0.5 4.5Q6.5 -2 12.5 4.5Q6.5 11 0.5 4.5Z" fill="#fff" stroke="#555"/><circle cx="6.5" cy="4.5" r="2.2" fill="#6a7fa8"/></svg>
<div class="t " style="left:2387px;top:1202.7px;font-size:11px;">Deck</div>
<div class="t " style="right:49px;top:1202.7px;font-size:11px;">12</div>
<svg style="left:2313px;top:1204px;" width="13" height="9" viewBox="0 0 13 9"><path d="M0.5 4.5Q6.5 -2 12.5 4.5Q6.5 11 0.5 4.5Z" fill="#fff" stroke="#555"/><circle cx="6.5" cy="4.5" r="2.2" fill="#6a7fa8"/></svg>
<div class="t " style="left:2387px;top:1219.7px;font-size:11px;">Gate</div>
<div class="t " style="right:49px;top:1219.7px;font-size:11px;">13</div>
<svg style="left:2313px;top:1221px;" width="13" height="9" viewBox="0 0 13 9"><path d="M0.5 4.5Q6.5 -2 12.5 4.5Q6.5 11 0.5 4.5Z" fill="#fff" stroke="#555"/><circle cx="6.5" cy="4.5" r="2.2" fill="#6a7fa8"/></svg>
<div class="t " style="left:2387px;top:1236.7px;font-size:11px;">Landscape Walls</div>
<div class="t " style="right:49px;top:1236.7px;font-size:11px;">14</div>
<svg style="left:2313px;top:1238px;" width="13" height="9" viewBox="0 0 13 9"><path d="M0.5 4.5Q6.5 -2 12.5 4.5Q6.5 11 0.5 4.5Z" fill="#fff" stroke="#555"/><circle cx="6.5" cy="4.5" r="2.2" fill="#6a7fa8"/></svg>
<div class="a" style="left:2312px;top:1250px;width:201px;height:17px;background:#bcd8f0"></div>
<div class="a" style="left:2312px;top:1250px;width:48px;height:17px;border:1px solid #3a7ad0;box-sizing:border-box"></div>
<svg style="left:2367px;top:1255px;" width="9" height="8" viewBox="0 0 9 8"><path d="M0.5 4L3.3 7L8.5 0.8" fill="none" stroke="#111" stroke-width="1.5"/></svg>
<div class="t " style="left:2387px;top:1253.6px;font-size:11.2px;font-weight:bold">Fence</div>
<div class="t " style="right:49px;top:1253.7px;font-size:11px;">15</div>
<svg style="left:2313px;top:1255px;" width="13" height="9" viewBox="0 0 13 9"><path d="M0.5 4.5Q6.5 -2 12.5 4.5Q6.5 11 0.5 4.5Z" fill="#fff" stroke="#555"/><circle cx="6.5" cy="4.5" r="2.2" fill="#6a7fa8"/></svg>
<div class="t " style="left:2387px;top:1270.7px;font-size:11px;">Plant Bed</div>
<div class="t " style="right:49px;top:1270.7px;font-size:11px;">16</div>
<svg style="left:2332px;top:1272px;" width="8" height="8" viewBox="0 0 8 8"><path d="M0.5 0.5L7.5 7.5M7.5 0.5L0.5 7.5" stroke="#111" stroke-width="1.6"/></svg>
<div class="t " style="left:2387px;top:1287.7px;font-size:11px;">Patio Proposed</div>
<div class="t " style="right:49px;top:1287.7px;font-size:11px;">17</div>
<svg style="left:2313px;top:1289px;" width="13" height="9" viewBox="0 0 13 9"><path d="M0.5 4.5Q6.5 -2 12.5 4.5Q6.5 11 0.5 4.5Z" fill="#fff" stroke="#555"/><circle cx="6.5" cy="4.5" r="2.2" fill="#6a7fa8"/></svg>
<div class="t " style="left:2387px;top:1304.7px;font-size:11px;">Lawn</div>
<div class="t " style="right:49px;top:1304.7px;font-size:11px;">18</div>
<svg style="left:2313px;top:1306px;" width="13" height="9" viewBox="0 0 13 9"><path d="M0.5 4.5Q6.5 -2 12.5 4.5Q6.5 11 0.5 4.5Z" fill="#fff" stroke="#555"/><circle cx="6.5" cy="4.5" r="2.2" fill="#6a7fa8"/></svg>
<div class="t " style="left:2387px;top:1321.7px;font-size:11px;">Basement</div>
<div class="t " style="right:49px;top:1321.7px;font-size:11px;">19</div>
<svg style="left:2313px;top:1323px;" width="13" height="9" viewBox="0 0 13 9"><path d="M0.5 4.5Q6.5 -2 12.5 4.5Q6.5 11 0.5 4.5Z" fill="#fff" stroke="#555"/><circle cx="6.5" cy="4.5" r="2.2" fill="#6a7fa8"/></svg>
<div class="t " style="left:2387px;top:1338.7px;font-size:11px;">Design Layer-1</div>
<div class="t " style="right:49px;top:1338.7px;font-size:11px;">20</div>
<svg style="left:2332px;top:1340px;" width="8" height="8" viewBox="0 0 8 8"><path d="M0.5 0.5L7.5 7.5M7.5 0.5L0.5 7.5" stroke="#111" stroke-width="1.6"/></svg>
<div class="a" style="left:0px;top:1374px;width:2560px;height:26px;background:#f0f0f0"></div>
<div class="t " style="left:4px;top:1382.2px;font-size:12.1px;">For Help, press F1 or click the ? icon</div>
<div class="t " style="left:1952px;top:1383.2px;font-size:12px;">X: 32.00</div>
<div class="t " style="left:2058px;top:1383.2px;font-size:12px;">Y: 181.80</div>
<div class="t " style="left:2163px;top:1383.2px;font-size:12px;">Z: .00</div>
<div class="a" style="left:2271px;top:1376px;width:23px;height:23px;background:#f0f0f0;border:1px solid #a8a8a8;box-sizing:border-box"></div>
<svg style="left:2272px;top:1377px;" width="21" height="21" viewBox="0 0 21 21"><path d="M5 3V9M2 6H8M15 3V9M12 6H18M5 12V18M2 15H8M14 13V17M12 15H16" stroke="#111" stroke-width="1.3"/><path d="M15 19L19 15V19Z" fill="none" stroke="#111" stroke-width="0.8"/></svg>
<div class="a" style="left:2297px;top:1376px;width:23px;height:23px;background:#cce4f7;border:1px solid #a8a8a8;box-sizing:border-box"></div>
<svg style="left:2298px;top:1377px;" width="21" height="21" viewBox="0 0 21 21"><rect x="3" y="3" width="13" height="13" fill="none" stroke="#111" stroke-width="1.6"/><path d="M16 19L20 15V19Z" fill="none" stroke="#111" stroke-width="0.8"/></svg>
<div class="a" style="left:2323px;top:1376px;width:23px;height:23px;background:#cce4f7;border:1px solid #a8a8a8;box-sizing:border-box"></div>
<svg style="left:2324px;top:1377px;" width="21" height="21" viewBox="0 0 21 21"><path d="M3 3V17H17M3 5L14 16M6 14L12 6" stroke="#111" stroke-width="1.2" fill="none"/><path d="M16 19L20 15V19Z" fill="none" stroke="#111" stroke-width="0.8"/></svg>
<div class="a" style="left:2349px;top:1376px;width:23px;height:23px;background:#cce4f7;border:1px solid #a8a8a8;box-sizing:border-box"></div>
<svg style="left:2350px;top:1377px;" width="21" height="21" viewBox="0 0 21 21"><path d="M4 4L16 16M16 4L4 16" stroke="#111" stroke-width="1.4"/></svg>
<div class="a" style="left:2375px;top:1376px;width:23px;height:23px;background:#cce4f7;border:1px solid #a8a8a8;box-sizing:border-box"></div>
<svg style="left:2376px;top:1377px;" width="21" height="21" viewBox="0 0 21 21"><rect x="2" y="3" width="5" height="5" fill="none" stroke="#111"/><path d="M9 5H18M4 10V17" stroke="#111" stroke-dasharray="2 1.5"/><path d="M16 19L20 15V19Z" fill="none" stroke="#111" stroke-width="0.8"/></svg>
<div class="a" style="left:2401px;top:1376px;width:23px;height:23px;background:#f0f0f0;border:1px solid #a8a8a8;box-sizing:border-box"></div>
<svg style="left:2402px;top:1377px;" width="21" height="21" viewBox="0 0 21 21"><path d="M3 17L16 4" stroke="#111" stroke-width="1.3" stroke-dasharray="3 2"/><path d="M16 19L20 15V19Z" fill="none" stroke="#111" stroke-width="0.8"/></svg>
<div class="a" style="left:2427px;top:1376px;width:23px;height:23px;background:#f0f0f0;border:1px solid #a8a8a8;box-sizing:border-box"></div>
<svg style="left:2428px;top:1377px;" width="21" height="21" viewBox="0 0 21 21"><path d="M3 16L14 4M3 16H14M7 9L12 13" stroke="#111" stroke-width="1.3" fill="none"/><path d="M16 19L20 15V19Z" fill="none" stroke="#111" stroke-width="0.8"/></svg>
<div class="a" style="left:2453px;top:1376px;width:23px;height:23px;background:#a8a8a8;border:1px solid #909090;box-sizing:border-box"></div>
<svg style="left:2454px;top:1377px;" width="21" height="21" viewBox="0 0 21 21"><path d="M3 9Q10 2 17 9M10 6V19" stroke="#111" stroke-width="1.5" fill="none"/></svg>
<div class="a" style="left:2479px;top:1376px;width:23px;height:23px;background:#f0f0f0;border:1px solid #a8a8a8;box-sizing:border-box"></div>
<svg style="left:2480px;top:1377px;" width="21" height="21" viewBox="0 0 21 21"><path d="M10 2L18 10L10 18L2 10Z" fill="none" stroke="#111" stroke-width="1.3"/><path d="M6 6L14 14M14 6L6 14" stroke="#111"/></svg>
<div class="a" style="left:2510px;top:1376px;width:23px;height:23px;background:#f0f0f0;border:1px solid #a8a8a8;box-sizing:border-box"></div>
<svg style="left:2511px;top:1377px;" width="21" height="21" viewBox="0 0 21 21"><rect x="6" y="4" width="3" height="12" fill="#111"/><rect x="11" y="4" width="3" height="12" fill="#111"/></svg>
<div class="a" style="left:2536px;top:1376px;width:23px;height:23px;background:#f0f0f0;border:1px solid #a8a8a8;box-sizing:border-box"></div>
<svg style="left:2537px;top:1377px;" width="21" height="21" viewBox="0 0 21 21"><circle cx="10" cy="10" r="5" fill="#111" stroke="#111" stroke-width="3" stroke-dasharray="2.5 1.5"/><circle cx="10" cy="10" r="2" fill="#f0f0f0"/></svg>
<div class="a" style="left:0px;top:1400px;width:2560px;height:40px;background:linear-gradient(90deg,#26303e 0,#2b303a 30%,#35373b 40%,#3d3e40 48%,#383a3d 56%,#2d3139 68%,#272d37 100%)"></div>
<div class="a" style="left:0px;top:1400px;width:48px;height:40px;background:#23344a"></div>
<svg style="left:16px;top:1412px;" width="17" height="17" viewBox="0 0 17 17"><path d="M0 2.3L7 1.3V7.8H0ZM8 1.2L17 0V7.8H8ZM0 8.8H7V15.4L0 14.4ZM8 8.8H17V17L8 15.6Z" fill="#fff"/></svg>
<div class="a" style="left:48px;top:1400px;width:344px;height:40px;background:#f2f2f2;border-top:1px solid #cfcfcf;box-sizing:border-box"></div>
<svg style="left:60px;top:1412px;" width="17" height="17" viewBox="0 0 17 17"><circle cx="10.5" cy="6.5" r="5.5" fill="none" stroke="#222" stroke-width="1.4"/><path d="M6.5 10.5L1 16" stroke="#222" stroke-width="1.5"/></svg>
<div class="t " style="left:88px;top:1414.0px;font-size:14.5px;color:#2a2a2a">Type here to search</div>
<div class="a" style="left:883px;top:1400px;width:48px;height:40px;background:#5c5c5c"></div>
<svg style="left:405px;top:1410px;" width="22" height="22" viewBox="0 0 22 22"><circle cx="11" cy="11" r="7" fill="none" stroke="#fff" stroke-width="2"/></svg>
<svg style="left:454px;top:1410px;" width="20" height="20" viewBox="0 0 20 20"><path d="M1 4H14V14H1ZM2 1H13M2 17H13M17 1V17" fill="none" stroke="#fff" stroke-width="1.5"/></svg>
<svg style="left:505px;top:1408px;" width="18" height="25" viewBox="0 0 18 25"><rect x="0" y="0" width="18" height="25" rx="2" fill="#7a8a98"/><rect x="2" y="2" width="14" height="4" fill="#6ad0f0"/><path d="M2 8H6V11H2ZM7 8H11V11H7ZM12 8H16V11H12ZM2 13H6V16H2ZM7 13H11V16H7ZM2 18H6V21H2ZM7 18H11V21H7Z" fill="#ddd"/><rect x="12" y="13" width="4" height="9" fill="#1a4a8a"/></svg>
<svg style="left:552px;top:1410px;" width="24" height="20" viewBox="0 0 24 20"><path d="M0 2H9L11 4H24V20H0Z" fill="#f4c430"/><path d="M0 6H24V20H0Z" fill="#ffd54a"/><rect x="7" y="12" width="10" height="8" fill="#1a8ad8"/></svg>
<svg style="left:601px;top:1409px;" width="23" height="23" viewBox="0 0 23 23"><circle cx="11.5" cy="11.5" r="11" fill="#e04a3a"/><path d="M11.5 11.5L22 8A11 11 0 0 1 8 22Z" fill="#f4c430"/><path d="M11.5 11.5L8 22A11 11 0 0 1 1.5 6Z" fill="#2aa050"/><circle cx="11.5" cy="11.5" r="5" fill="#fff"/><circle cx="11.5" cy="11.5" r="3.8" fill="#3a7ae8"/></svg>
<svg style="left:652px;top:1409px;" width="18" height="23" viewBox="0 0 18 23"><path d="M2 4L14 0L18 3V20L14 23L2 19L14 21V3L6 6V17L2 19Z" fill="#e8482a"/></svg>
<svg style="left:700px;top:1408px;" width="21" height="25" viewBox="0 0 21 25"><path d="M3 3L7 0H14L18 3L21 6L19 14L16 20L10.5 25L5 20L2 14L0 6Z" fill="#f05a28"/><path d="M6 9L10.5 16L15 9L10.5 12Z" fill="#fff"/></svg>
<svg style="left:749px;top:1409px;" width="24" height="23" viewBox="0 0 24 23"><rect x="8" y="0" width="16" height="21" fill="#1a7ad8"/><path d="M8 10H24V23H8Z" fill="#0a5ab0"/><rect x="0" y="5" width="13" height="13" rx="1" fill="#0a64c0"/><circle cx="6.5" cy="11.5" r="3.5" fill="none" stroke="#fff" stroke-width="2"/></svg>
<svg style="left:798px;top:1409px;" width="23" height="23" viewBox="0 0 23 23"><circle cx="11.5" cy="11.5" r="11.5" fill="#1ed760"/><path d="M5 8Q12 5.5 18.5 9M6 12Q12 10 17 12.8M7 15.5Q11.5 14 15.5 16" fill="none" stroke="#111" stroke-width="2" stroke-linecap="round"/></svg>
<svg style="left:847px;top:1409px;" width="24" height="23" viewBox="0 0 24 23"><rect x="7" y="0" width="17" height="23" fill="#2b6bd0"/><path d="M7 8H24V16H7Z" fill="#1a50b0"/><rect x="0" y="5" width="13" height="13" fill="#1a4aa8"/><path d="M2 8L4 15L6.5 10L9 15L11 8" fill="none" stroke="#fff" stroke-width="1.5"/></svg>
<svg style="left:895px;top:1408px;" width="24" height="24" viewBox="0 0 24 24"><circle cx="12" cy="12" r="11.5" fill="#fff"/><circle cx="12" cy="12" r="10" fill="#111"/><path d="M8 7.5L12 16L16 7.5" fill="none" stroke="#fff" stroke-width="2.2"/></svg>
<div class="a" style="left:495px;top:1438px;width:40px;height:2px;background:#76b9ed"></div>
<div class="a" style="left:593px;top:1438px;width:40px;height:2px;background:#76b9ed"></div>
<div class="a" style="left:691px;top:1438px;width:40px;height:2px;background:#76b9ed"></div>
<div class="a" style="left:789px;top:1438px;width:40px;height:2px;background:#76b9ed"></div>
<div class="a" style="left:838px;top:1438px;width:40px;height:2px;background:#76b9ed"></div>
<div class="a" style="left:883px;top:1438px;width:48px;height:2px;background:#76b9ed"></div>
<svg style="left:2183px;top:1409px;" width="22" height="20" viewBox="0 0 22 20"><circle cx="8" cy="8" r="5" fill="#f4c430"/><path d="M3 19Q0 19 0.5 15Q1 12 5 12Q6 7 12 7Q18 7 18 12Q22 12 21.5 16Q21 19 18 19Z" fill="#d8ecfa" stroke="#9ac8f0" stroke-width="0.8"/></svg>
<div class="t " style="left:2214px;top:1414.3px;font-size:14px;color:#fff">50&deg;F</div>
<div class="t " style="left:2250px;top:1414.3px;font-size:14px;color:#fff">Mostly cloudy</div>
<svg style="left:2353px;top:1415px;" width="12" height="7" viewBox="0 0 12 7"><path d="M0.5 6.5L6 1L11.5 6.5" fill="none" stroke="#fff" stroke-width="1.3"/></svg>
<svg style="left:2377px;top:1413px;" width="16" height="14" viewBox="0 0 16 14"><path d="M1 13Q1 1 15 1M4 13Q4 5 15 5M7.5 13Q7.5 9 15 9" fill="none" stroke="#fff" stroke-width="1.2"/><circle cx="13" cy="12" r="1.5" fill="#fff"/></svg>
<svg style="left:2398px;top:1413px;" width="17" height="15" viewBox="0 0 17 15"><path d="M1 5H4L8 1V14L4 10H1Z" fill="none" stroke="#fff" stroke-width="1.2"/><path d="M11 4Q13 7.5 11 11M13.5 2Q17 7.5 13.5 13" fill="none" stroke="#fff" stroke-width="1.1"/></svg>
<svg style="left:2424px;top:1411px;" width="14" height="18" viewBox="0 0 14 18"><rect x="1" y="8" width="12" height="10" fill="#3ab54a"/><path d="M3.5 8V5Q7 0 10.5 5V8" fill="none" stroke="#3ab54a" stroke-width="2"/></svg>
<div class="t " style="left:2435.0px;width:80px;text-align:center;top:1405.2px;font-size:12px;color:#fff">9:54 AM</div>
<div class="t " style="left:2435.0px;width:80px;text-align:center;top:1423.2px;font-size:12px;color:#fff">2/12/2022</div>
<svg style="left:2516px;top:1408px;" width="26" height="26" viewBox="0 0 26 26"><path d="M3 3H19V15H9L5 19V15H3Z" fill="none" stroke="#fff" stroke-width="1.3"/><path d="M6 7H16M6 10H16" stroke="#fff"/><circle cx="18" cy="19" r="6" fill="#2c2c2c" stroke="#777"/><text x="18" y="23" font-size="10" text-anchor="middle" fill="#fff" font-family="Liberation Sans">1</text></svg>
<div class="a" style="left:2556px;top:1400px;width:1px;height:40px;background:#555"></div>
</body></html>
